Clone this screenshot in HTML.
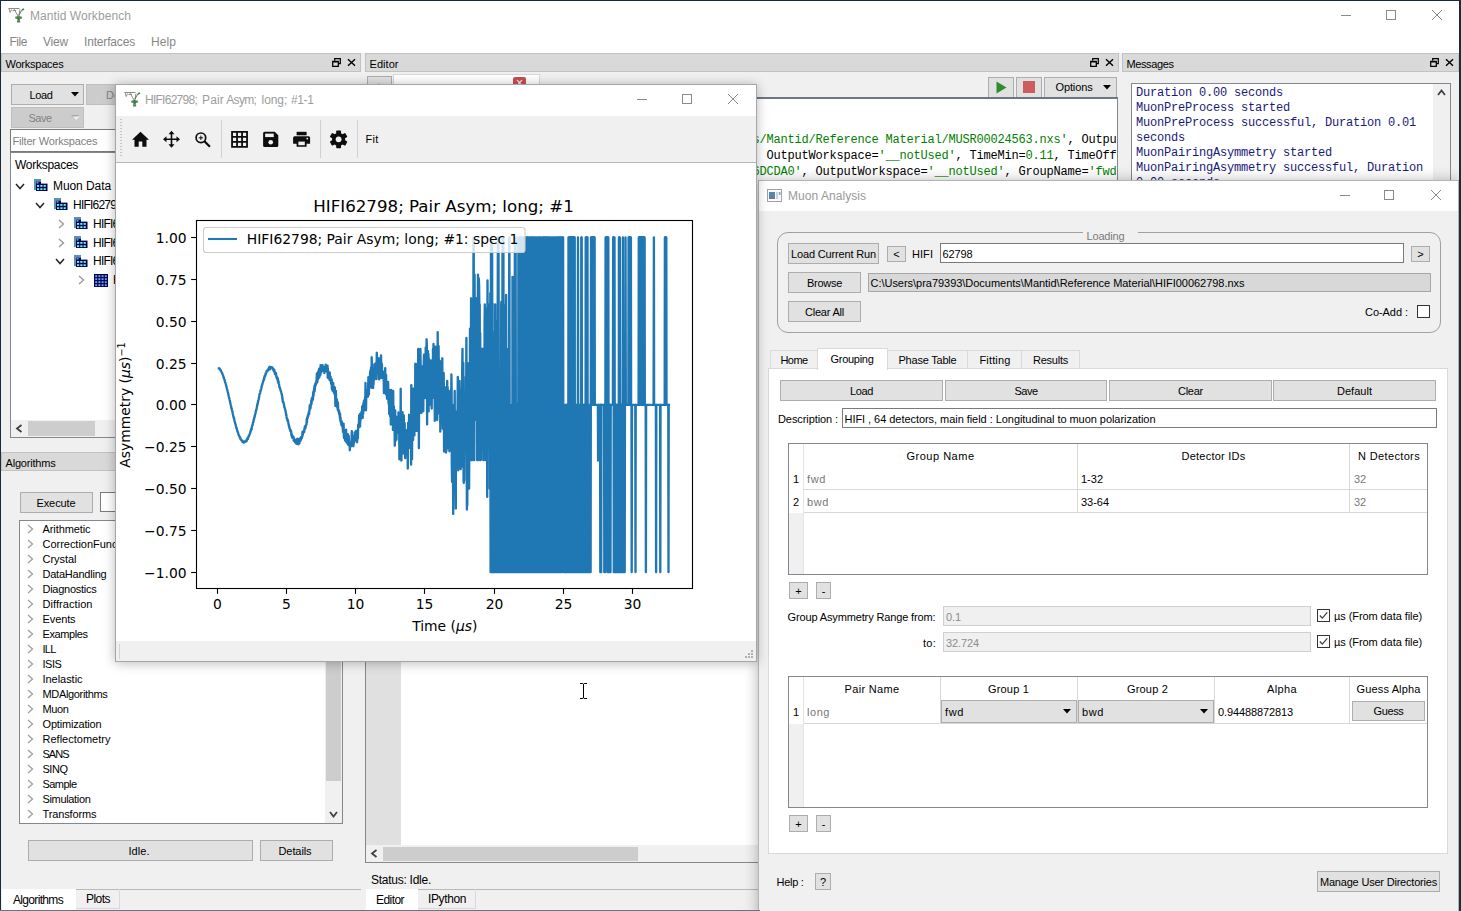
<!DOCTYPE html>
<html><head><meta charset="utf-8"><title>Mantid Workbench</title>
<style>
html,body{margin:0;padding:0;}
body{width:1461px;height:911px;overflow:hidden;background:#f0f0f0;position:relative;font-family:"Liberation Sans",sans-serif;}
#root{position:absolute;left:0;top:0;width:1461px;height:911px;overflow:hidden;background:#f0f0f0;}
#root div,#root svg,#root span.t{position:absolute;}
span.t{white-space:pre;}
svg{overflow:visible;}
</style></head><body><div id="root">
<div style="left:1px;top:1px;width:1458px;height:30px;background:#fff;"></div>
<svg style="left:8px;top:7px" width="17" height="16" viewBox="0 0 17 16">
<path d="M0.5 1.5 H11.5 M1 1.5 L2.2 5.5 L3.5 2.5 M4.5 3.5 H8 M6 2 L10 9 M12 2.5 L10.8 9" stroke="#8d8d8d" stroke-width="1" fill="none"/>
<path d="M10.8 8.5 L13 4.2 L14.5 2.8" stroke="#5a6a5a" stroke-width="1" fill="none"/>
<path d="M14 3 L16 2" stroke="#2e8b2e" stroke-width="1.4"/>
<ellipse cx="10.6" cy="10.6" rx="3.6" ry="1.6" fill="#6f7f6f"/>
<rect x="9.4" y="9.6" width="2.4" height="4.2" fill="#2e8b2e"/>
<rect x="9" y="13.6" width="3.2" height="1.9" fill="#6e6e6e"/>
</svg>
<span class="t" style="left:30.00px;top:7.80px;font-size:12px;line-height:16px;color:#9d9d9d;letter-spacing:0.073px;">Mantid Workbench</span>
<div style="left:1341px;top:15px;width:10px;height:1px;background:#8a8a8a;"></div>
<div style="left:1386px;top:10px;width:10px;height:10px;border:1px solid #8a8a8a;box-sizing:border-box;"></div>
<svg style="left:1431px;top:9px" width="12" height="12" viewBox="0 0 12 12"><path d="M1 1 L11 11 M11 1 L1 11" stroke="#8a8a8a" stroke-width="1" fill="none"/></svg>
<div style="left:1px;top:31px;width:1458px;height:22px;background:#fff;"></div>
<span class="t" style="left:9.50px;top:34.00px;font-size:12px;line-height:16px;color:#868686;letter-spacing:-0.459px;">File</span>
<span class="t" style="left:43.00px;top:34.00px;font-size:12px;line-height:16px;color:#868686;letter-spacing:-0.199px;">View</span>
<span class="t" style="left:84.00px;top:34.00px;font-size:12px;line-height:16px;color:#868686;letter-spacing:-0.169px;">Interfaces</span>
<span class="t" style="left:151.00px;top:34.00px;font-size:12px;line-height:16px;color:#868686;letter-spacing:0.080px;">Help</span>
<div style="left:1px;top:53px;width:360px;height:19px;background:#d9d9d9;border:1px solid #c2c2c2;box-sizing:border-box;"></div>
<span class="t" style="left:5.50px;top:57.00px;font-size:11px;line-height:15px;color:#000;letter-spacing:-0.232px;">Workspaces</span>
<svg style="left:331.7px;top:58px" width="9" height="9" viewBox="0 0 9 9"><path d="M2.7 2.5 V0.7 H8.3 V5.7 H6.5 M0.7 3.3 H6.3 V8.3 H0.7 Z M0.7 3.9 H6.3" stroke="#000" stroke-width="1.25" fill="none"/></svg>
<svg style="left:347.2px;top:58px" width="9" height="9" viewBox="0 0 9 9"><path d="M1 1.2 L8 7.8 M8 1.2 L1 7.8" stroke="#000" stroke-width="1.4" fill="none"/></svg>
<div style="left:11px;top:84px;width:73px;height:21px;background:#e1e1e1;border:1px solid #adadad;box-sizing:border-box;"></div>
<span class="t" style="left:29.50px;top:88.00px;font-size:11px;line-height:15px;color:#000;letter-spacing:-0.368px;">Load</span>
<svg style="left:70.5px;top:92px" width="8" height="5" viewBox="0 0 8 5"><path d="M0 0 H8 L4 4.5 Z" fill="#000"/></svg>
<div style="left:11px;top:107px;width:73px;height:21px;background:#cccccc;border:1px solid #bfbfbf;box-sizing:border-box;"></div>
<span class="t" style="left:28.50px;top:110.80px;font-size:11px;line-height:15px;color:#838383;letter-spacing:-0.518px;">Save</span>
<svg style="left:71px;top:115px" width="8" height="5" viewBox="0 0 8 5"><path d="M0 0 H8 L4 4.5 Z" fill="#a8a8a8"/><path d="M1.5 1.5 L8.5 1.5 L4.8 5 Z" fill="#fff" opacity="0.8"/></svg>
<div style="left:86px;top:84px;width:73px;height:21px;background:#cccccc;border:1px solid #bfbfbf;box-sizing:border-box;"></div>
<span class="t" style="left:106.00px;top:87.50px;font-size:11px;line-height:15px;color:#838383;">De</span>
<div style="left:10px;top:129px;width:340px;height:23px;background:#fff;border:1px solid #7a7a7a;box-sizing:border-box;"></div>
<span class="t" style="left:12.40px;top:133.50px;font-size:11px;line-height:15px;color:#7f7f7f;letter-spacing:-0.166px;">Filter Workspaces</span>
<div style="left:10px;top:152px;width:340px;height:286px;background:#fff;border:1px solid #828790;box-sizing:border-box;"></div>
<span class="t" style="left:15.00px;top:156.50px;font-size:12px;line-height:16px;color:#000;letter-spacing:-0.280px;">Workspaces</span>
<svg style="left:15px;top:182.8px" width="10" height="7" viewBox="0 0 10 7"><path d="M1 1 L5 5.5 L9 1" stroke="#262626" stroke-width="1.5" fill="none"/></svg>
<svg style="left:34px;top:179.3px" width="14" height="12" viewBox="0 0 14 13" preserveAspectRatio="none">
<rect x="0" y="0" width="7" height="4" fill="#5f8fb8"/><rect x="0" y="0" width="2" height="12" fill="#5f8fb8"/>
<rect x="2" y="3" width="5" height="3" fill="#000060"/>
<rect x="2" y="5" width="11.5" height="8" fill="#00004a"/>
<g fill="#66f0f0"><rect x="3" y="6.5" width="2.2" height="2"/><rect x="6.3" y="6.5" width="2.2" height="2"/><rect x="9.6" y="6.5" width="2.2" height="2"/>
<rect x="3" y="10" width="2.2" height="2"/><rect x="6.3" y="10" width="2.2" height="2"/><rect x="9.6" y="10" width="2.2" height="2"/>
<rect x="2.5" y="3.6" width="2" height="1.2"/></g>
</svg>
<span class="t" style="left:53.00px;top:177.80px;font-size:12px;line-height:16px;color:#000;letter-spacing:-0.078px;">Muon Data</span>
<svg style="left:35px;top:201.7px" width="10" height="7" viewBox="0 0 10 7"><path d="M1 1 L5 5.5 L9 1" stroke="#262626" stroke-width="1.5" fill="none"/></svg>
<svg style="left:54px;top:198.2px" width="14" height="12" viewBox="0 0 14 13" preserveAspectRatio="none">
<rect x="0" y="0" width="7" height="4" fill="#5f8fb8"/><rect x="0" y="0" width="2" height="12" fill="#5f8fb8"/>
<rect x="2" y="3" width="5" height="3" fill="#000060"/>
<rect x="2" y="5" width="11.5" height="8" fill="#00004a"/>
<g fill="#66f0f0"><rect x="3" y="6.5" width="2.2" height="2"/><rect x="6.3" y="6.5" width="2.2" height="2"/><rect x="9.6" y="6.5" width="2.2" height="2"/>
<rect x="3" y="10" width="2.2" height="2"/><rect x="6.3" y="10" width="2.2" height="2"/><rect x="9.6" y="10" width="2.2" height="2"/>
<rect x="2.5" y="3.6" width="2" height="1.2"/></g>
</svg>
<span class="t" style="left:73.00px;top:196.70px;font-size:12px;line-height:16px;color:#000;letter-spacing:-0.782px;">HIFI62798</span>
<svg style="left:58px;top:218.6px" width="7" height="10" viewBox="0 0 7 10"><path d="M1 1 L5.5 5 L1 9" stroke="#9a9a9a" stroke-width="1.4" fill="none"/></svg>
<svg style="left:74px;top:217.1px" width="14" height="12" viewBox="0 0 14 13" preserveAspectRatio="none">
<rect x="0" y="0" width="7" height="4" fill="#5f8fb8"/><rect x="0" y="0" width="2" height="12" fill="#5f8fb8"/>
<rect x="2" y="3" width="5" height="3" fill="#000060"/>
<rect x="2" y="5" width="11.5" height="8" fill="#00004a"/>
<g fill="#66f0f0"><rect x="3" y="6.5" width="2.2" height="2"/><rect x="6.3" y="6.5" width="2.2" height="2"/><rect x="9.6" y="6.5" width="2.2" height="2"/>
<rect x="3" y="10" width="2.2" height="2"/><rect x="6.3" y="10" width="2.2" height="2"/><rect x="9.6" y="10" width="2.2" height="2"/>
<rect x="2.5" y="3.6" width="2" height="1.2"/></g>
</svg>
<span class="t" style="left:93.00px;top:215.60px;font-size:12px;line-height:16px;color:#000;letter-spacing:-0.782px;">HIFI62798</span>
<svg style="left:58px;top:237.5px" width="7" height="10" viewBox="0 0 7 10"><path d="M1 1 L5.5 5 L1 9" stroke="#9a9a9a" stroke-width="1.4" fill="none"/></svg>
<svg style="left:74px;top:236.0px" width="14" height="12" viewBox="0 0 14 13" preserveAspectRatio="none">
<rect x="0" y="0" width="7" height="4" fill="#5f8fb8"/><rect x="0" y="0" width="2" height="12" fill="#5f8fb8"/>
<rect x="2" y="3" width="5" height="3" fill="#000060"/>
<rect x="2" y="5" width="11.5" height="8" fill="#00004a"/>
<g fill="#66f0f0"><rect x="3" y="6.5" width="2.2" height="2"/><rect x="6.3" y="6.5" width="2.2" height="2"/><rect x="9.6" y="6.5" width="2.2" height="2"/>
<rect x="3" y="10" width="2.2" height="2"/><rect x="6.3" y="10" width="2.2" height="2"/><rect x="9.6" y="10" width="2.2" height="2"/>
<rect x="2.5" y="3.6" width="2" height="1.2"/></g>
</svg>
<span class="t" style="left:93.00px;top:234.50px;font-size:12px;line-height:16px;color:#000;letter-spacing:-0.782px;">HIFI62798</span>
<svg style="left:55px;top:258.4px" width="10" height="7" viewBox="0 0 10 7"><path d="M1 1 L5 5.5 L9 1" stroke="#262626" stroke-width="1.5" fill="none"/></svg>
<svg style="left:74px;top:254.89999999999998px" width="14" height="12" viewBox="0 0 14 13" preserveAspectRatio="none">
<rect x="0" y="0" width="7" height="4" fill="#5f8fb8"/><rect x="0" y="0" width="2" height="12" fill="#5f8fb8"/>
<rect x="2" y="3" width="5" height="3" fill="#000060"/>
<rect x="2" y="5" width="11.5" height="8" fill="#00004a"/>
<g fill="#66f0f0"><rect x="3" y="6.5" width="2.2" height="2"/><rect x="6.3" y="6.5" width="2.2" height="2"/><rect x="9.6" y="6.5" width="2.2" height="2"/>
<rect x="3" y="10" width="2.2" height="2"/><rect x="6.3" y="10" width="2.2" height="2"/><rect x="9.6" y="10" width="2.2" height="2"/>
<rect x="2.5" y="3.6" width="2" height="1.2"/></g>
</svg>
<span class="t" style="left:93.00px;top:253.40px;font-size:12px;line-height:16px;color:#000;letter-spacing:-0.782px;">HIFI62798</span>
<svg style="left:78px;top:275.3px" width="7" height="10" viewBox="0 0 7 10"><path d="M1 1 L5.5 5 L1 9" stroke="#9a9a9a" stroke-width="1.4" fill="none"/></svg>
<svg style="left:94px;top:273.8px" width="14" height="13" viewBox="0 0 14 13">
<rect x="0" y="0" width="14" height="13" fill="#000050"/><g fill="#6fa0e8"><rect x="1.2" y="1.2" width="2" height="1.9"/><rect x="1.2" y="4.2" width="2" height="1.9"/><rect x="1.2" y="7.2" width="2" height="1.9"/><rect x="1.2" y="10.2" width="2" height="1.9"/><rect x="4.4" y="1.2" width="2" height="1.9"/><rect x="4.4" y="4.2" width="2" height="1.9"/><rect x="4.4" y="7.2" width="2" height="1.9"/><rect x="4.4" y="10.2" width="2" height="1.9"/><rect x="7.6000000000000005" y="1.2" width="2" height="1.9"/><rect x="7.6000000000000005" y="4.2" width="2" height="1.9"/><rect x="7.6000000000000005" y="7.2" width="2" height="1.9"/><rect x="7.6000000000000005" y="10.2" width="2" height="1.9"/><rect x="10.8" y="1.2" width="2" height="1.9"/><rect x="10.8" y="4.2" width="2" height="1.9"/><rect x="10.8" y="7.2" width="2" height="1.9"/><rect x="10.8" y="10.2" width="2" height="1.9"/></g></svg>
<span class="t" style="left:113.00px;top:272.30px;font-size:12px;line-height:16px;color:#000;letter-spacing:-0.782px;">HIFI62798</span>
<div style="left:11px;top:420px;width:338px;height:17px;background:#f0f0f0;"></div>
<div style="left:28px;top:421px;width:67px;height:15px;background:#cdcdcd;"></div>
<svg style="left:15px;top:424px" width="8" height="9" viewBox="0 0 8 9"><path d="M6.5 1 L2 4.5 L6.5 8" stroke="#404040" stroke-width="1.8" fill="none"/></svg>
<div style="left:1px;top:452px;width:360px;height:19px;background:#d9d9d9;border:1px solid #c2c2c2;box-sizing:border-box;"></div>
<span class="t" style="left:5.50px;top:456.00px;font-size:11px;line-height:15px;color:#000;letter-spacing:-0.196px;">Algorithms</span>
<svg style="left:331.7px;top:457px" width="9" height="9" viewBox="0 0 9 9"><path d="M2.7 2.5 V0.7 H8.3 V5.7 H6.5 M0.7 3.3 H6.3 V8.3 H0.7 Z M0.7 3.9 H6.3" stroke="#000" stroke-width="1.25" fill="none"/></svg>
<svg style="left:347.2px;top:457px" width="9" height="9" viewBox="0 0 9 9"><path d="M1 1.2 L8 7.8 M8 1.2 L1 7.8" stroke="#000" stroke-width="1.4" fill="none"/></svg>
<div style="left:20px;top:492px;width:73px;height:21px;background:#e1e1e1;border:1px solid #adadad;box-sizing:border-box;"></div>
<span class="t" style="left:36.50px;top:495.80px;font-size:11px;line-height:15px;color:#000;letter-spacing:-0.107px;">Execute</span>
<div style="left:100px;top:492px;width:243px;height:20px;background:#fff;border:1px solid #7a7a7a;box-sizing:border-box;"></div>
<div style="left:19px;top:520px;width:324px;height:304px;background:#fff;border:1px solid #828790;box-sizing:border-box;"></div>
<svg style="left:27px;top:524px" width="7" height="10" viewBox="0 0 7 10"><path d="M1 1 L5.5 5 L1 9" stroke="#a0a0a0" stroke-width="1.3" fill="none"/></svg>
<span class="t" style="left:42.50px;top:521.50px;font-size:11px;line-height:15px;color:#000;letter-spacing:-0.090px;">Arithmetic</span>
<svg style="left:27px;top:539px" width="7" height="10" viewBox="0 0 7 10"><path d="M1 1 L5.5 5 L1 9" stroke="#a0a0a0" stroke-width="1.3" fill="none"/></svg>
<span class="t" style="left:42.50px;top:536.50px;font-size:11px;line-height:15px;color:#000;letter-spacing:-0.023px;">CorrectionFunctions</span>
<svg style="left:27px;top:554px" width="7" height="10" viewBox="0 0 7 10"><path d="M1 1 L5.5 5 L1 9" stroke="#a0a0a0" stroke-width="1.3" fill="none"/></svg>
<span class="t" style="left:42.50px;top:551.50px;font-size:11px;line-height:15px;color:#000;letter-spacing:-0.032px;">Crystal</span>
<svg style="left:27px;top:569px" width="7" height="10" viewBox="0 0 7 10"><path d="M1 1 L5.5 5 L1 9" stroke="#a0a0a0" stroke-width="1.3" fill="none"/></svg>
<span class="t" style="left:42.50px;top:566.50px;font-size:11px;line-height:15px;color:#000;letter-spacing:-0.221px;">DataHandling</span>
<svg style="left:27px;top:584px" width="7" height="10" viewBox="0 0 7 10"><path d="M1 1 L5.5 5 L1 9" stroke="#a0a0a0" stroke-width="1.3" fill="none"/></svg>
<span class="t" style="left:42.50px;top:581.50px;font-size:11px;line-height:15px;color:#000;letter-spacing:-0.260px;">Diagnostics</span>
<svg style="left:27px;top:599px" width="7" height="10" viewBox="0 0 7 10"><path d="M1 1 L5.5 5 L1 9" stroke="#a0a0a0" stroke-width="1.3" fill="none"/></svg>
<span class="t" style="left:42.50px;top:596.50px;font-size:11px;line-height:15px;color:#000;letter-spacing:0.062px;">Diffraction</span>
<svg style="left:27px;top:614px" width="7" height="10" viewBox="0 0 7 10"><path d="M1 1 L5.5 5 L1 9" stroke="#a0a0a0" stroke-width="1.3" fill="none"/></svg>
<span class="t" style="left:42.50px;top:611.50px;font-size:11px;line-height:15px;color:#000;letter-spacing:-0.105px;">Events</span>
<svg style="left:27px;top:629px" width="7" height="10" viewBox="0 0 7 10"><path d="M1 1 L5.5 5 L1 9" stroke="#a0a0a0" stroke-width="1.3" fill="none"/></svg>
<span class="t" style="left:42.50px;top:626.50px;font-size:11px;line-height:15px;color:#000;letter-spacing:-0.412px;">Examples</span>
<svg style="left:27px;top:644px" width="7" height="10" viewBox="0 0 7 10"><path d="M1 1 L5.5 5 L1 9" stroke="#a0a0a0" stroke-width="1.3" fill="none"/></svg>
<span class="t" style="left:42.50px;top:641.50px;font-size:11px;line-height:15px;color:#000;letter-spacing:-0.764px;">ILL</span>
<svg style="left:27px;top:659px" width="7" height="10" viewBox="0 0 7 10"><path d="M1 1 L5.5 5 L1 9" stroke="#a0a0a0" stroke-width="1.3" fill="none"/></svg>
<span class="t" style="left:42.50px;top:656.50px;font-size:11px;line-height:15px;color:#000;letter-spacing:-0.447px;">ISIS</span>
<svg style="left:27px;top:674px" width="7" height="10" viewBox="0 0 7 10"><path d="M1 1 L5.5 5 L1 9" stroke="#a0a0a0" stroke-width="1.3" fill="none"/></svg>
<span class="t" style="left:42.50px;top:671.50px;font-size:11px;line-height:15px;color:#000;letter-spacing:-0.039px;">Inelastic</span>
<svg style="left:27px;top:689px" width="7" height="10" viewBox="0 0 7 10"><path d="M1 1 L5.5 5 L1 9" stroke="#a0a0a0" stroke-width="1.3" fill="none"/></svg>
<span class="t" style="left:42.50px;top:686.50px;font-size:11px;line-height:15px;color:#000;letter-spacing:-0.339px;">MDAlgorithms</span>
<svg style="left:27px;top:704px" width="7" height="10" viewBox="0 0 7 10"><path d="M1 1 L5.5 5 L1 9" stroke="#a0a0a0" stroke-width="1.3" fill="none"/></svg>
<span class="t" style="left:42.50px;top:701.50px;font-size:11px;line-height:15px;color:#000;letter-spacing:-0.379px;">Muon</span>
<svg style="left:27px;top:719px" width="7" height="10" viewBox="0 0 7 10"><path d="M1 1 L5.5 5 L1 9" stroke="#a0a0a0" stroke-width="1.3" fill="none"/></svg>
<span class="t" style="left:42.50px;top:716.50px;font-size:11px;line-height:15px;color:#000;letter-spacing:-0.178px;">Optimization</span>
<svg style="left:27px;top:734px" width="7" height="10" viewBox="0 0 7 10"><path d="M1 1 L5.5 5 L1 9" stroke="#a0a0a0" stroke-width="1.3" fill="none"/></svg>
<span class="t" style="left:42.50px;top:731.50px;font-size:11px;line-height:15px;color:#000;letter-spacing:0.011px;">Reflectometry</span>
<svg style="left:27px;top:749px" width="7" height="10" viewBox="0 0 7 10"><path d="M1 1 L5.5 5 L1 9" stroke="#a0a0a0" stroke-width="1.3" fill="none"/></svg>
<span class="t" style="left:42.50px;top:746.50px;font-size:11px;line-height:15px;color:#000;letter-spacing:-0.989px;">SANS</span>
<svg style="left:27px;top:764px" width="7" height="10" viewBox="0 0 7 10"><path d="M1 1 L5.5 5 L1 9" stroke="#a0a0a0" stroke-width="1.3" fill="none"/></svg>
<span class="t" style="left:42.50px;top:761.50px;font-size:11px;line-height:15px;color:#000;letter-spacing:-0.473px;">SINQ</span>
<svg style="left:27px;top:779px" width="7" height="10" viewBox="0 0 7 10"><path d="M1 1 L5.5 5 L1 9" stroke="#a0a0a0" stroke-width="1.3" fill="none"/></svg>
<span class="t" style="left:42.50px;top:776.50px;font-size:11px;line-height:15px;color:#000;letter-spacing:-0.550px;">Sample</span>
<svg style="left:27px;top:794px" width="7" height="10" viewBox="0 0 7 10"><path d="M1 1 L5.5 5 L1 9" stroke="#a0a0a0" stroke-width="1.3" fill="none"/></svg>
<span class="t" style="left:42.50px;top:791.50px;font-size:11px;line-height:15px;color:#000;letter-spacing:-0.336px;">Simulation</span>
<svg style="left:27px;top:809px" width="7" height="10" viewBox="0 0 7 10"><path d="M1 1 L5.5 5 L1 9" stroke="#a0a0a0" stroke-width="1.3" fill="none"/></svg>
<span class="t" style="left:42.50px;top:806.50px;font-size:11px;line-height:15px;color:#000;letter-spacing:-0.121px;">Transforms</span>
<div style="left:325px;top:521px;width:17px;height:302px;background:#f0f0f0;"></div>
<div style="left:326px;top:540px;width:15px;height:241px;background:#cdcdcd;"></div>
<svg style="left:329px;top:811px" width="9" height="7" viewBox="0 0 9 7"><path d="M1 1 L4.5 5.5 L8 1" stroke="#404040" stroke-width="1.8" fill="none"/></svg>
<div style="left:28px;top:840px;width:225px;height:21px;background:#e1e1e1;border:1px solid #adadad;box-sizing:border-box;"></div>
<span class="t" style="left:128.50px;top:843.80px;font-size:11px;line-height:15px;color:#000;letter-spacing:0.042px;">Idle.</span>
<div style="left:260px;top:840px;width:73px;height:21px;background:#e1e1e1;border:1px solid #adadad;box-sizing:border-box;"></div>
<span class="t" style="left:278.50px;top:843.80px;font-size:11px;line-height:15px;color:#000;letter-spacing:-0.089px;">Details</span>
<div style="left:76px;top:889px;width:285px;height:1px;background:#b9b9b9;"></div>
<div style="left:2px;top:889px;width:74px;height:22px;background:#fff;"></div>
<span class="t" style="left:13.00px;top:892.00px;font-size:12px;line-height:16px;color:#000;letter-spacing:-0.669px;">Algorithms</span>
<div style="left:76px;top:889px;width:44px;height:20px;border-right:1px solid #d9d9d9;border-bottom:1px solid #d9d9d9;box-sizing:border-box;"></div>
<span class="t" style="left:86.00px;top:891.00px;font-size:12px;line-height:16px;color:#000;letter-spacing:-0.536px;">Plots</span>
<div style="left:365px;top:53px;width:754px;height:19px;background:#d9d9d9;border:1px solid #c2c2c2;box-sizing:border-box;"></div>
<span class="t" style="left:369.50px;top:57.00px;font-size:11px;line-height:15px;color:#000;letter-spacing:0.044px;">Editor</span>
<svg style="left:1089.7px;top:58px" width="9" height="9" viewBox="0 0 9 9"><path d="M2.7 2.5 V0.7 H8.3 V5.7 H6.5 M0.7 3.3 H6.3 V8.3 H0.7 Z M0.7 3.9 H6.3" stroke="#000" stroke-width="1.25" fill="none"/></svg>
<svg style="left:1105.2px;top:58px" width="9" height="9" viewBox="0 0 9 9"><path d="M1 1.2 L8 7.8 M8 1.2 L1 7.8" stroke="#000" stroke-width="1.4" fill="none"/></svg>
<div style="left:367px;top:76px;width:25px;height:22px;background:#e1e1e1;border:1px solid #adadad;box-sizing:border-box;"></div>
<span class="t" style="left:375.20px;top:77.50px;font-size:13px;line-height:17px;color:#000;">+</span>
<div style="left:393px;top:74px;width:147px;height:24px;background:#fff;border:1px solid #d9d9d9;box-sizing:border-box;"></div>
<span class="t" style="left:418.00px;top:80.50px;font-size:11px;line-height:15px;color:#000;">temp.py</span>
<div style="left:513px;top:77px;width:13px;height:12px;background:#c75050;border-radius:2px;"></div>
<span class="t" style="left:516.00px;top:75.00px;font-size:12px;line-height:16px;color:#fff;">×</span>
<div style="left:988px;top:77px;width:26px;height:21px;background:#e1e1e1;border:1px solid #adadad;box-sizing:border-box;"></div>
<svg style="left:996px;top:81px" width="11" height="13" viewBox="0 0 11 13"><path d="M0.5 0.5 L10.5 6.5 L0.5 12.5 Z" fill="#2e8b2e"/></svg>
<div style="left:1016px;top:77px;width:26px;height:21px;background:#e1e1e1;border:1px solid #adadad;box-sizing:border-box;"></div>
<div style="left:1023px;top:81px;width:12px;height:12px;background:#cd5c5c;"></div>
<div style="left:1044px;top:77px;width:73px;height:21px;background:#e1e1e1;border:1px solid #adadad;box-sizing:border-box;"></div>
<span class="t" style="left:1055.50px;top:79.50px;font-size:11px;line-height:15px;color:#000;letter-spacing:-0.130px;">Options</span>
<svg style="left:1103px;top:85px" width="8" height="5" viewBox="0 0 8 5"><path d="M0 0 H8 L4 4.5 Z" fill="#000"/></svg>
<div style="left:365px;top:97px;width:753px;height:766px;background:#fff;border:1px solid #828790;border-top:2px solid #6e7680;box-sizing:border-box;"></div>
<div style="left:366px;top:99px;width:35px;height:746px;background:#e0e0e0;"></div>
<span class="t" style="left:752.50px;top:132.00px;font-size:12px;line-height:16px;color:#007f00;font-family:'Liberation Mono', monospace;letter-spacing:-0.201px;">s/Mantid/Reference Material/MUSR00024563.nxs'</span>
<span class="t" style="left:1067.50px;top:132.00px;font-size:12px;line-height:16px;color:#000;font-family:'Liberation Mono', monospace;letter-spacing:-0.201px;">, Outpu</span>
<span class="t" style="left:752.50px;top:148.00px;font-size:12px;line-height:16px;color:#007f00;font-family:'Liberation Mono', monospace;">,</span>
<span class="t" style="left:759.50px;top:148.00px;font-size:12px;line-height:16px;color:#000;font-family:'Liberation Mono', monospace;letter-spacing:-0.201px;"> OutputWorkspace=</span>
<span class="t" style="left:878.50px;top:148.00px;font-size:12px;line-height:16px;color:#007f00;font-family:'Liberation Mono', monospace;letter-spacing:-0.201px;">'__notUsed'</span>
<span class="t" style="left:955.50px;top:148.00px;font-size:12px;line-height:16px;color:#000;font-family:'Liberation Mono', monospace;letter-spacing:-0.201px;">, TimeMin=</span>
<span class="t" style="left:1025.50px;top:148.00px;font-size:12px;line-height:16px;color:#007f00;font-family:'Liberation Mono', monospace;letter-spacing:-0.201px;">0.11</span>
<span class="t" style="left:1053.50px;top:148.00px;font-size:12px;line-height:16px;color:#000;font-family:'Liberation Mono', monospace;letter-spacing:-0.201px;">, TimeOff</span>
<span class="t" style="left:752.50px;top:164.00px;font-size:12px;line-height:16px;color:#007f00;font-family:'Liberation Mono', monospace;letter-spacing:-0.201px;">6DCDA0'</span>
<span class="t" style="left:801.50px;top:164.00px;font-size:12px;line-height:16px;color:#000;font-family:'Liberation Mono', monospace;letter-spacing:-0.201px;">, OutputWorkspace=</span>
<span class="t" style="left:927.50px;top:164.00px;font-size:12px;line-height:16px;color:#007f00;font-family:'Liberation Mono', monospace;letter-spacing:-0.201px;">'__notUsed'</span>
<span class="t" style="left:1004.50px;top:164.00px;font-size:12px;line-height:16px;color:#000;font-family:'Liberation Mono', monospace;letter-spacing:-0.201px;">, GroupName=</span>
<span class="t" style="left:1088.50px;top:164.00px;font-size:12px;line-height:16px;color:#007f00;font-family:'Liberation Mono', monospace;letter-spacing:-0.201px;">'fwd</span>
<div style="left:366px;top:845px;width:751px;height:17px;background:#f0f0f0;"></div>
<div style="left:383px;top:846.5px;width:255px;height:14px;background:#cdcdcd;"></div>
<svg style="left:370px;top:849px" width="8" height="9" viewBox="0 0 8 9"><path d="M6.5 1 L2 4.5 L6.5 8" stroke="#404040" stroke-width="1.8" fill="none"/></svg>
<span class="t" style="left:371.00px;top:872.00px;font-size:12px;line-height:16px;color:#000;letter-spacing:-0.259px;">Status: Idle.</span>
<div style="left:418px;top:889px;width:701px;height:1px;background:#b9b9b9;"></div>
<div style="left:366px;top:889px;width:52px;height:22px;background:#fff;"></div>
<span class="t" style="left:376.00px;top:892.00px;font-size:12px;line-height:16px;color:#000;letter-spacing:-0.558px;">Editor</span>
<div style="left:418px;top:889px;width:58px;height:20px;border-right:1px solid #d9d9d9;border-bottom:1px solid #d9d9d9;box-sizing:border-box;"></div>
<span class="t" style="left:428.00px;top:891.00px;font-size:12px;line-height:16px;color:#000;letter-spacing:-0.385px;">IPython</span>
<svg style="left:579px;top:683px" width="9" height="16" viewBox="0 0 9 16"><path d="M1 0.5 H3.8 M5.2 0.5 H8 M1 15.5 H3.8 M5.2 15.5 H8 M4.5 1 V15 M3.8 0.5 L4.5 1.2 L5.2 0.5 M3.8 15.5 L4.5 14.8 L5.2 15.5" stroke="#000" stroke-width="1" fill="none"/></svg>
<div style="left:1122px;top:53px;width:337px;height:19px;background:#d9d9d9;border:1px solid #c2c2c2;box-sizing:border-box;"></div>
<span class="t" style="left:1126.50px;top:57.00px;font-size:11px;line-height:15px;color:#000;letter-spacing:-0.392px;">Messages</span>
<svg style="left:1429.7px;top:58px" width="9" height="9" viewBox="0 0 9 9"><path d="M2.7 2.5 V0.7 H8.3 V5.7 H6.5 M0.7 3.3 H6.3 V8.3 H0.7 Z M0.7 3.9 H6.3" stroke="#000" stroke-width="1.25" fill="none"/></svg>
<svg style="left:1445.2px;top:58px" width="9" height="9" viewBox="0 0 9 9"><path d="M1 1.2 L8 7.8 M8 1.2 L1 7.8" stroke="#000" stroke-width="1.4" fill="none"/></svg>
<div style="left:1131px;top:83px;width:320px;height:120px;background:#fff;border:1px solid #828790;box-sizing:border-box;"></div>
<span class="t" style="left:1136.00px;top:85.00px;font-size:12px;line-height:16px;color:#1a1a78;font-family:'Liberation Mono', monospace;letter-spacing:-0.201px;">Duration 0.00 seconds</span>
<span class="t" style="left:1136.00px;top:100.00px;font-size:12px;line-height:16px;color:#1a1a78;font-family:'Liberation Mono', monospace;letter-spacing:-0.201px;">MuonPreProcess started</span>
<span class="t" style="left:1136.00px;top:115.00px;font-size:12px;line-height:16px;color:#1a1a78;font-family:'Liberation Mono', monospace;letter-spacing:-0.201px;">MuonPreProcess successful, Duration 0.01</span>
<span class="t" style="left:1136.00px;top:130.00px;font-size:12px;line-height:16px;color:#1a1a78;font-family:'Liberation Mono', monospace;letter-spacing:-0.201px;">seconds</span>
<span class="t" style="left:1136.00px;top:145.00px;font-size:12px;line-height:16px;color:#1a1a78;font-family:'Liberation Mono', monospace;letter-spacing:-0.201px;">MuonPairingAsymmetry started</span>
<span class="t" style="left:1136.00px;top:160.00px;font-size:12px;line-height:16px;color:#1a1a78;font-family:'Liberation Mono', monospace;letter-spacing:-0.201px;">MuonPairingAsymmetry successful, Duration</span>
<span class="t" style="left:1136.00px;top:175.00px;font-size:12px;line-height:16px;color:#1a1a78;font-family:'Liberation Mono', monospace;letter-spacing:-0.201px;">0.00 seconds</span>
<div style="left:1433px;top:84px;width:17px;height:118px;background:#f0f0f0;"></div>
<svg style="left:1437px;top:89px" width="9" height="7" viewBox="0 0 9 7"><path d="M1 6 L4.5 1.5 L8 6" stroke="#404040" stroke-width="1.8" fill="none"/></svg>
<div style="left:758px;top:180px;width:701px;height:740px;background:#f0f0f0;border:1px solid #b4b4b4;box-sizing:border-box;box-shadow:0 1px 13px rgba(0,0,0,0.3);"></div>
<div style="left:759px;top:181px;width:699px;height:30px;background:#fff;"></div>
<svg style="left:767px;top:189px" width="15" height="13" viewBox="0 0 15 13"><defs><linearGradient id="mi" x1="0" y1="0" x2="0.6" y2="1"><stop offset="0" stop-color="#3f8fe0"/><stop offset="1" stop-color="#6f7c8a"/></linearGradient></defs><rect x="0.5" y="0.5" width="14" height="12" fill="#fbfbfb" stroke="#a2a2a2"/><rect x="2" y="3" width="6" height="7" fill="url(#mi)"/><rect x="9" y="3" width="2.2" height="7" fill="#d2d2d2"/><rect x="12" y="3" width="1.5" height="3" fill="#6fa3dc"/></svg>
<span class="t" style="left:788.00px;top:187.50px;font-size:12px;line-height:16px;color:#999;letter-spacing:0.048px;">Muon Analysis</span>
<div style="left:1340px;top:195px;width:10px;height:1px;background:#8a8a8a;"></div>
<div style="left:1384px;top:190px;width:10px;height:10px;border:1px solid #8a8a8a;box-sizing:border-box;"></div>
<svg style="left:1430px;top:189px" width="12" height="12" viewBox="0 0 12 12"><path d="M1 1 L11 11 M11 1 L1 11" stroke="#8a8a8a" stroke-width="1" fill="none"/></svg>
<div style="left:777px;top:232px;width:664px;height:101px;border:1px solid #a0a0a0;border-radius:11px;box-sizing:border-box;"></div>
<div style="left:1083px;top:228px;width:55px;height:10px;background:#f0f0f0;"></div>
<span class="t" style="left:1086.50px;top:228.50px;font-size:11px;line-height:15px;color:#7b7b7b;letter-spacing:-0.164px;">Loading</span>
<div style="left:788px;top:243px;width:91px;height:21px;background:#e1e1e1;border:1px solid #adadad;box-sizing:border-box;"></div>
<span class="t" style="left:791.00px;top:246.80px;font-size:11px;line-height:15px;color:#000;letter-spacing:-0.153px;">Load Current Run</span>
<div style="left:887px;top:246px;width:19px;height:16px;background:#e1e1e1;border:1px solid #adadad;box-sizing:border-box;"></div>
<span class="t" style="left:893.29px;top:247.30px;font-size:11px;line-height:15px;color:#000;">&lt;</span>
<span class="t" style="left:912.00px;top:246.50px;font-size:11px;line-height:15px;color:#000;letter-spacing:0.056px;">HIFI</span>
<div style="left:940px;top:243px;width:464px;height:20px;background:#fff;border:1px solid #7a7a7a;box-sizing:border-box;"></div>
<span class="t" style="left:942.50px;top:246.50px;font-size:11px;line-height:15px;color:#000;letter-spacing:-0.118px;">62798</span>
<div style="left:1411px;top:246px;width:19px;height:16px;background:#e1e1e1;border:1px solid #adadad;box-sizing:border-box;"></div>
<span class="t" style="left:1417.29px;top:247.30px;font-size:11px;line-height:15px;color:#000;">&gt;</span>
<div style="left:788px;top:272px;width:73px;height:21px;background:#e1e1e1;border:1px solid #adadad;box-sizing:border-box;"></div>
<span class="t" style="left:807.00px;top:275.80px;font-size:11px;line-height:15px;color:#000;letter-spacing:-0.280px;">Browse</span>
<div style="left:868px;top:273px;width:563px;height:19px;background:#d8d8d8;border:1px solid #a6a6a6;box-sizing:border-box;"></div>
<span class="t" style="left:870.50px;top:275.50px;font-size:11px;line-height:15px;color:#000;letter-spacing:-0.029px;">C:\Users\pra79393\Documents\Mantid\Reference Material\HIFI00062798.nxs</span>
<div style="left:788px;top:301px;width:73px;height:21px;background:#e1e1e1;border:1px solid #adadad;box-sizing:border-box;"></div>
<span class="t" style="left:805.00px;top:304.80px;font-size:11px;line-height:15px;color:#000;letter-spacing:-0.218px;">Clear All</span>
<span class="t" style="left:1365.00px;top:304.50px;font-size:11px;line-height:15px;color:#000;letter-spacing:-0.051px;">Co-Add :</span>
<div style="left:1417px;top:305px;width:13px;height:13px;background:#fff;border:1px solid #333;box-sizing:border-box;"></div>
<div style="left:768px;top:368px;width:680px;height:486px;background:#fff;border:1px solid #d9d9d9;box-sizing:border-box;"></div>
<div style="left:770px;top:350px;width:48px;height:19px;background:#f0f0f0;border:1px solid #d9d9d9;box-sizing:border-box;"></div>
<span class="t" style="left:780.50px;top:352.50px;font-size:11px;line-height:15px;color:#000;letter-spacing:-0.586px;">Home</span>
<div style="left:887px;top:350px;width:81px;height:19px;background:#f0f0f0;border:1px solid #d9d9d9;box-sizing:border-box;"></div>
<span class="t" style="left:898.50px;top:352.50px;font-size:11px;line-height:15px;color:#000;letter-spacing:-0.213px;">Phase Table</span>
<div style="left:967px;top:350px;width:56px;height:19px;background:#f0f0f0;border:1px solid #d9d9d9;box-sizing:border-box;"></div>
<span class="t" style="left:979.50px;top:352.50px;font-size:11px;line-height:15px;color:#000;letter-spacing:0.149px;">Fitting</span>
<div style="left:1021px;top:350px;width:59px;height:19px;background:#f0f0f0;border:1px solid #d9d9d9;box-sizing:border-box;"></div>
<span class="t" style="left:1033.00px;top:352.50px;font-size:11px;line-height:15px;color:#000;letter-spacing:-0.240px;">Results</span>
<div style="left:817px;top:348px;width:71px;height:22px;background:#fff;border:1px solid #d9d9d9;border-bottom:none;box-sizing:border-box;"></div>
<span class="t" style="left:830.50px;top:351.50px;font-size:11px;line-height:15px;color:#000;letter-spacing:-0.282px;">Grouping</span>
<div style="left:780px;top:380px;width:163px;height:21px;background:#e1e1e1;border:1px solid #adadad;box-sizing:border-box;"></div>
<span class="t" style="left:850.00px;top:383.80px;font-size:11px;line-height:15px;color:#000;letter-spacing:-0.368px;">Load</span>
<div style="left:945px;top:380px;width:162px;height:21px;background:#e1e1e1;border:1px solid #adadad;box-sizing:border-box;"></div>
<span class="t" style="left:1014.50px;top:383.80px;font-size:11px;line-height:15px;color:#000;letter-spacing:-0.518px;">Save</span>
<div style="left:1109px;top:380px;width:163px;height:21px;background:#e1e1e1;border:1px solid #adadad;box-sizing:border-box;"></div>
<span class="t" style="left:1178.00px;top:383.80px;font-size:11px;line-height:15px;color:#000;letter-spacing:-0.257px;">Clear</span>
<div style="left:1273px;top:380px;width:163px;height:21px;background:#e1e1e1;border:1px solid #adadad;box-sizing:border-box;"></div>
<span class="t" style="left:1337.00px;top:383.80px;font-size:11px;line-height:15px;color:#000;letter-spacing:0.021px;">Default</span>
<span class="t" style="left:778.00px;top:411.50px;font-size:11px;line-height:15px;color:#000;letter-spacing:-0.087px;">Description :</span>
<div style="left:842px;top:408px;width:595px;height:20px;background:#fff;border:1px solid #7a7a7a;box-sizing:border-box;"></div>
<span class="t" style="left:844.50px;top:411.50px;font-size:11px;line-height:15px;color:#000;letter-spacing:-0.049px;">HIFI , 64 detectors, main field : Longitudinal to muon polarization</span>
<div style="left:788px;top:443px;width:640px;height:132px;background:#fff;border:1px solid #828790;box-sizing:border-box;"></div>
<div style="left:789px;top:513px;width:15px;height:61px;background:#f0f0f0;"></div>
<div style="left:803px;top:444px;width:1px;height:130px;background:#e5e5e5;"></div>
<div style="left:804px;top:489px;width:623px;height:1px;background:#d8d8d8;"></div>
<div style="left:804px;top:512px;width:623px;height:1px;background:#d8d8d8;"></div>
<div style="left:1077px;top:444px;width:1px;height:69px;background:#d8d8d8;"></div>
<div style="left:1349px;top:444px;width:1px;height:69px;background:#d8d8d8;"></div>
<span class="t" style="left:906.50px;top:448.60px;font-size:11px;line-height:15px;color:#000;letter-spacing:0.503px;">Group Name</span>
<span class="t" style="left:1181.50px;top:448.60px;font-size:11px;line-height:15px;color:#000;letter-spacing:0.239px;">Detector IDs</span>
<span class="t" style="left:1358.00px;top:448.60px;font-size:11px;line-height:15px;color:#000;letter-spacing:0.357px;">N Detectors</span>
<span class="t" style="left:793.00px;top:471.70px;font-size:11px;line-height:15px;color:#000;">1</span>
<span class="t" style="left:793.00px;top:494.70px;font-size:11px;line-height:15px;color:#000;">2</span>
<span class="t" style="left:807.00px;top:471.70px;font-size:11px;line-height:15px;color:#787878;letter-spacing:0.627px;">fwd</span>
<span class="t" style="left:807.00px;top:494.70px;font-size:11px;line-height:15px;color:#787878;letter-spacing:0.607px;">bwd</span>
<span class="t" style="left:1081.00px;top:471.70px;font-size:11px;line-height:15px;color:#000;">1-32</span>
<span class="t" style="left:1081.00px;top:494.70px;font-size:11px;line-height:15px;color:#000;letter-spacing:-0.027px;">33-64</span>
<span class="t" style="left:1354.00px;top:471.70px;font-size:11px;line-height:15px;color:#787878;letter-spacing:-0.118px;">32</span>
<span class="t" style="left:1354.00px;top:494.70px;font-size:11px;line-height:15px;color:#787878;letter-spacing:-0.118px;">32</span>
<div style="left:789px;top:582px;width:19px;height:17px;background:#e1e1e1;border:1px solid #adadad;box-sizing:border-box;"></div>
<span class="t" style="left:795.29px;top:583.80px;font-size:11px;line-height:15px;color:#000;">+</span>
<div style="left:816px;top:582px;width:15px;height:17px;background:#e1e1e1;border:1px solid #adadad;box-sizing:border-box;"></div>
<span class="t" style="left:821.67px;top:583.80px;font-size:11px;line-height:15px;color:#000;">-</span>
<span class="t" style="left:787.50px;top:609.50px;font-size:11px;line-height:15px;color:#000;letter-spacing:-0.134px;">Group Asymmetry Range from:</span>
<div style="left:943px;top:606px;width:368px;height:20px;background:#f0f0f0;border:1px solid #cfcfcf;box-sizing:border-box;"></div>
<span class="t" style="left:946.00px;top:609.50px;font-size:11px;line-height:15px;color:#8c8c8c;letter-spacing:-0.097px;">0.1</span>
<span class="t" style="left:923.00px;top:635.50px;font-size:11px;line-height:15px;color:#000;letter-spacing:0.257px;">to:</span>
<div style="left:943px;top:632px;width:368px;height:20px;background:#f0f0f0;border:1px solid #cfcfcf;box-sizing:border-box;"></div>
<span class="t" style="left:946.00px;top:635.50px;font-size:11px;line-height:15px;color:#8c8c8c;letter-spacing:-0.108px;">32.724</span>
<div style="left:1317px;top:609px;width:13px;height:13px;background:#fff;border:1px solid #333;box-sizing:border-box;"></div>
<svg style="left:1317px;top:609px" width="13" height="13" viewBox="0 0 13 13"><path d="M2.8 6.5 L5.3 9.2 L10.3 3.3" stroke="#3c3c3c" stroke-width="1.2" fill="none"/></svg>
<div style="left:1317px;top:635px;width:13px;height:13px;background:#fff;border:1px solid #333;box-sizing:border-box;"></div>
<svg style="left:1317px;top:635px" width="13" height="13" viewBox="0 0 13 13"><path d="M2.8 6.5 L5.3 9.2 L10.3 3.3" stroke="#3c3c3c" stroke-width="1.2" fill="none"/></svg>
<span class="t" style="left:1334.00px;top:608.50px;font-size:11px;line-height:15px;color:#000;letter-spacing:-0.077px;">µs (From data file)</span>
<span class="t" style="left:1334.00px;top:634.50px;font-size:11px;line-height:15px;color:#000;letter-spacing:-0.077px;">µs (From data file)</span>
<div style="left:788px;top:676px;width:640px;height:132px;background:#fff;border:1px solid #828790;box-sizing:border-box;"></div>
<div style="left:789px;top:724px;width:15px;height:83px;background:#f0f0f0;"></div>
<div style="left:803px;top:677px;width:1px;height:130px;background:#e5e5e5;"></div>
<div style="left:804px;top:723px;width:623px;height:1px;background:#d8d8d8;"></div>
<div style="left:940px;top:677px;width:1px;height:47px;background:#d8d8d8;"></div>
<div style="left:1077px;top:677px;width:1px;height:47px;background:#d8d8d8;"></div>
<div style="left:1214px;top:677px;width:1px;height:47px;background:#d8d8d8;"></div>
<div style="left:1349px;top:677px;width:1px;height:47px;background:#d8d8d8;"></div>
<span class="t" style="left:844.50px;top:682.10px;font-size:11px;line-height:15px;color:#000;letter-spacing:0.338px;">Pair Name</span>
<span class="t" style="left:988.00px;top:682.10px;font-size:11px;line-height:15px;color:#000;letter-spacing:0.179px;">Group 1</span>
<span class="t" style="left:1127.00px;top:682.10px;font-size:11px;line-height:15px;color:#000;letter-spacing:0.179px;">Group 2</span>
<span class="t" style="left:1267.00px;top:682.10px;font-size:11px;line-height:15px;color:#000;letter-spacing:0.373px;">Alpha</span>
<span class="t" style="left:1356.50px;top:682.10px;font-size:11px;line-height:15px;color:#000;letter-spacing:0.148px;">Guess Alpha</span>
<span class="t" style="left:793.00px;top:705.10px;font-size:11px;line-height:15px;color:#000;">1</span>
<span class="t" style="left:807.00px;top:705.10px;font-size:11px;line-height:15px;color:#787878;letter-spacing:0.551px;">long</span>
<div style="left:941px;top:700px;width:136px;height:23px;background:#e1e1e1;border:1px solid #adadad;box-sizing:border-box;"></div>
<span class="t" style="left:945.00px;top:705.10px;font-size:11px;line-height:15px;color:#000;letter-spacing:0.627px;">fwd</span>
<svg style="left:1063px;top:709px" width="8" height="5" viewBox="0 0 8 5"><path d="M0 0 H8 L4 4.5 Z" fill="#000"/></svg>
<div style="left:1078px;top:700px;width:136px;height:23px;background:#e1e1e1;border:1px solid #adadad;box-sizing:border-box;"></div>
<span class="t" style="left:1082.00px;top:705.10px;font-size:11px;line-height:15px;color:#000;letter-spacing:0.607px;">bwd</span>
<svg style="left:1200px;top:709px" width="8" height="5" viewBox="0 0 8 5"><path d="M0 0 H8 L4 4.5 Z" fill="#000"/></svg>
<span class="t" style="left:1218.00px;top:705.10px;font-size:11px;line-height:15px;color:#000;letter-spacing:-0.113px;">0.94488872813</span>
<div style="left:1352px;top:701px;width:73px;height:20px;background:#e1e1e1;border:1px solid #adadad;box-sizing:border-box;"></div>
<span class="t" style="left:1373.50px;top:704.30px;font-size:11px;line-height:15px;color:#000;letter-spacing:-0.358px;">Guess</span>
<div style="left:789px;top:815px;width:19px;height:17px;background:#e1e1e1;border:1px solid #adadad;box-sizing:border-box;"></div>
<span class="t" style="left:795.29px;top:816.80px;font-size:11px;line-height:15px;color:#000;">+</span>
<div style="left:816px;top:815px;width:15px;height:17px;background:#e1e1e1;border:1px solid #adadad;box-sizing:border-box;"></div>
<span class="t" style="left:821.67px;top:816.80px;font-size:11px;line-height:15px;color:#000;">-</span>
<span class="t" style="left:776.50px;top:874.50px;font-size:11px;line-height:15px;color:#000;letter-spacing:-0.289px;">Help :</span>
<div style="left:815px;top:873px;width:16px;height:17px;background:#e1e1e1;border:1px solid #adadad;box-sizing:border-box;"></div>
<span class="t" style="left:819.94px;top:874.80px;font-size:11px;line-height:15px;color:#000;">?</span>
<div style="left:1317px;top:871px;width:123px;height:21px;background:#e1e1e1;border:1px solid #adadad;box-sizing:border-box;"></div>
<span class="t" style="left:1320.00px;top:874.80px;font-size:11px;line-height:15px;color:#000;letter-spacing:-0.203px;">Manage User Directories</span>
<div style="left:115px;top:84px;width:642px;height:578px;background:#fff;border:1px solid #a5a5a5;box-sizing:border-box;box-shadow:0 1px 11px rgba(0,0,0,0.28);"></div>
<svg style="left:124px;top:91px" width="17" height="16" viewBox="0 0 17 16">
<path d="M0.5 1.5 H11.5 M1 1.5 L2.2 5.5 L3.5 2.5 M4.5 3.5 H8 M6 2 L10 9 M12 2.5 L10.8 9" stroke="#8d8d8d" stroke-width="1" fill="none"/>
<path d="M10.8 8.5 L13 4.2 L14.5 2.8" stroke="#5a6a5a" stroke-width="1" fill="none"/>
<path d="M14 3 L16 2" stroke="#2e8b2e" stroke-width="1.4"/>
<ellipse cx="10.6" cy="10.6" rx="3.6" ry="1.6" fill="#6f7f6f"/>
<rect x="9.4" y="9.6" width="2.4" height="4.2" fill="#2e8b2e"/>
<rect x="9" y="13.6" width="3.2" height="1.9" fill="#6e6e6e"/>
</svg>
<span class="t" style="left:145.00px;top:91.80px;font-size:12px;line-height:16px;color:#9d9d9d;letter-spacing:-0.737px;">HIFI62798;</span>
<span class="t" style="left:202.00px;top:91.80px;font-size:12px;line-height:16px;color:#9d9d9d;letter-spacing:0.165px;">Pair</span>
<span class="t" style="left:226.20px;top:91.80px;font-size:12px;line-height:16px;color:#9d9d9d;letter-spacing:-0.647px;">Asym;</span>
<span class="t" style="left:261.60px;top:91.80px;font-size:12px;line-height:16px;color:#9d9d9d;letter-spacing:-0.084px;">long;</span>
<span class="t" style="left:291.00px;top:91.80px;font-size:12px;line-height:16px;color:#9d9d9d;letter-spacing:-0.380px;">#1-1</span>
<div style="left:637px;top:99px;width:10px;height:1px;background:#8a8a8a;"></div>
<div style="left:682px;top:94px;width:10px;height:10px;border:1px solid #8a8a8a;box-sizing:border-box;"></div>
<svg style="left:727px;top:93px" width="12" height="12" viewBox="0 0 12 12"><path d="M1 1 L11 11 M11 1 L1 11" stroke="#8a8a8a" stroke-width="1" fill="none"/></svg>
<div style="left:116px;top:116px;width:640px;height:46px;background:#f0f0f0;"></div>
<div style="left:116px;top:162px;width:640px;height:1px;background:#b8b8b8;"></div>
<div style="left:120px;top:119px;width:2px;height:38px;background:repeating-linear-gradient(#c4c4c4 0 1px, transparent 1px 3px);"></div>
<div style="left:221px;top:120px;width:1px;height:38px;background:#d0d0d0;"></div>
<div style="left:320px;top:120px;width:1px;height:38px;background:#d0d0d0;"></div>
<div style="left:357px;top:120px;width:1px;height:38px;background:#d0d0d0;"></div>
<svg style="left:131px;top:130px" width="18" height="18" viewBox="0 0 18 18"><g transform="translate(0.5,0.3)"><path d="M9 1.5 L0.5 9.5 H3 V16.5 H7.2 V11.3 H10.8 V16.5 H15 V9.5 H17.5 Z" fill="#0d0d0d"/></g></svg>
<svg style="left:162px;top:130px" width="18" height="18" viewBox="0 0 18 18"><g transform="translate(0.5,0.3)"><path d="M9 2 V16 M2 9 H16" stroke="#0d0d0d" stroke-width="1.6" fill="none"/><path d="M9 0.5 L12 4 H6 Z M9 17.5 L12 14 H6 Z M0.5 9 L4 6 V12 Z M17.5 9 L14 6 V12 Z" fill="#0d0d0d"/></g></svg>
<svg style="left:194px;top:131px" width="17" height="17" viewBox="0 0 17 17"><g transform="translate(0.4,0.3)"><circle cx="6.5" cy="6.5" r="4.8" stroke="#0d0d0d" stroke-width="1.7" fill="none"/><path d="M10 10 L15.5 15.5" stroke="#0d0d0d" stroke-width="2.2"/><path d="M4.3 6.5 H8.7 M6.5 4.3 V8.7" stroke="#0d0d0d" stroke-width="1"/></g></svg>
<svg style="left:230px;top:130px" width="18" height="18" viewBox="0 0 18 18"><g transform="translate(0.55,0.3)"><path d="M1.5 1.5 H16.5 V16.5 H1.5 Z M6.5 1.5 V16.5 M11.5 1.5 V16.5 M1.5 6.5 H16.5 M1.5 11.5 H16.5" stroke="#0d0d0d" stroke-width="1.8" fill="none"/></g></svg>
<svg style="left:262px;top:131px" width="16.6" height="16.2" viewBox="0 0 16 16"><g transform="translate(0.4,0.3)"><path d="M0.5 2 Q0.5 0.5 2 0.5 H12 L15.5 4 V14 Q15.5 15.5 14 15.5 H2 Q0.5 15.5 0.5 14 Z" fill="#0d0d0d"/><rect x="2.5" y="2.3" width="8.5" height="3.4" fill="#f0f0f0"/><circle cx="8" cy="10.8" r="2.3" fill="#f0f0f0"/></g></svg>
<svg style="left:292px;top:131px" width="18" height="16" viewBox="0 0 18 16"><g transform="translate(0.6,0.3)"><rect x="4" y="0.5" width="10" height="3.5" fill="#0d0d0d"/><path d="M2 5 H16 Q17.5 5 17.5 6.5 V12.5 H14 V15.5 H4 V12.5 H0.5 V6.5 Q0.5 5 2 5 Z" fill="#0d0d0d"/><rect x="5.8" y="10.3" width="6.4" height="3.6" fill="#f0f0f0"/><circle cx="14.7" cy="7.3" r="0.9" fill="#f0f0f0"/></g></svg>
<svg style="left:329px;top:130px" width="18" height="18" viewBox="-9 -9 18 18"><g transform="translate(0.6,0.3)"><g fill="#0d0d0d"><rect x="-2.4" y="-8.9" width="4.8" height="4.5" rx="0.8" transform="rotate(0)"/><rect x="-2.4" y="-8.9" width="4.8" height="4.5" rx="0.8" transform="rotate(60)"/><rect x="-2.4" y="-8.9" width="4.8" height="4.5" rx="0.8" transform="rotate(120)"/><rect x="-2.4" y="-8.9" width="4.8" height="4.5" rx="0.8" transform="rotate(180)"/><rect x="-2.4" y="-8.9" width="4.8" height="4.5" rx="0.8" transform="rotate(240)"/><rect x="-2.4" y="-8.9" width="4.8" height="4.5" rx="0.8" transform="rotate(300)"/><circle r="6.5"/></g><circle r="2.9" fill="#f0f0f0"/></g></svg>
<span class="t" style="left:365.50px;top:131.50px;font-size:11px;line-height:15px;color:#000;letter-spacing:0.260px;">Fit</span>
<div style="left:116px;top:641px;width:640px;height:20px;background:#f0f0f0;"></div>
<div style="left:119px;top:644px;width:1px;height:15px;background:#d4d4d4;"></div>
<svg style="left:744px;top:649px" width="10" height="10" viewBox="0 0 10 10"><g fill="#b0b0b0"><rect x="7" y="1" width="2" height="2"/><rect x="4" y="4" width="2" height="2"/><rect x="7" y="4" width="2" height="2"/><rect x="1" y="7" width="2" height="2"/><rect x="4" y="7" width="2" height="2"/><rect x="7" y="7" width="2" height="2"/></g></svg>
<svg style="left:0;top:0" width="1461" height="911" viewBox="0 0 1461 911" font-family="DejaVu Sans, sans-serif">
<polyline points="218.8,368.4 219.1,368.4 219.3,368.3 219.5,368.7 219.7,368.8 219.9,369.3 220.2,369.6 220.4,370.3 220.6,370.0 220.8,370.3 221.0,371.0 221.3,371.2 221.5,371.9 221.7,372.5 221.9,372.6 222.2,373.2 222.4,373.8 222.6,374.4 222.8,374.9 223.0,375.4 223.3,376.2 223.5,376.7 223.7,377.4 223.9,378.2 224.1,378.7 224.4,379.3 224.6,380.0 224.8,381.1 225.0,381.8 225.3,382.6 225.5,382.8 225.7,383.8 225.9,384.5 226.1,385.4 226.4,386.4 226.6,387.3 226.8,388.1 227.0,389.1 227.2,389.5 227.5,390.7 227.7,391.7 227.9,392.4 228.1,393.5 228.3,393.9 228.6,395.8 228.8,396.7 229.0,397.1 229.2,398.1 229.5,399.2 229.7,400.1 229.9,400.9 230.1,402.3 230.3,403.0 230.6,404.3 230.8,405.0 231.0,405.8 231.2,406.8 231.4,408.3 231.7,408.5 231.9,409.7 232.1,410.4 232.3,411.6 232.6,412.5 232.8,414.0 233.0,414.6 233.2,415.6 233.4,416.4 233.7,417.8 233.9,417.9 234.1,418.9 234.3,419.6 234.5,420.8 234.8,421.7 235.0,422.1 235.2,423.4 235.4,423.9 235.7,425.0 235.9,426.1 236.1,426.5 236.3,427.6 236.5,428.2 236.8,428.8 237.0,429.8 237.2,430.9 237.4,431.0 237.6,431.7 237.9,432.3 238.1,432.7 238.3,433.6 238.5,434.1 238.7,435.1 239.0,435.6 239.2,435.7 239.4,436.3 239.6,437.0 239.9,437.6 240.1,437.4 240.3,438.7 240.5,438.7 240.7,439.2 241.0,439.5 241.2,439.8 241.4,440.1 241.6,440.5 241.8,440.2 242.1,440.4 242.3,441.7 242.5,441.9 242.7,441.4 243.0,441.2 243.2,441.8 243.4,441.8 243.6,442.0 243.8,442.6 244.1,441.7 244.3,441.5 244.5,441.6 244.7,442.1 244.9,442.1 245.2,441.4 245.4,441.6 245.6,441.2 245.8,440.8 246.1,441.0 246.3,441.3 246.5,441.1 246.7,440.9 246.9,439.1 247.2,439.4 247.4,439.4 247.6,438.2 247.8,439.1 248.0,437.7 248.3,437.2 248.5,437.2 248.7,436.0 248.9,436.0 249.1,435.7 249.4,434.9 249.6,434.4 249.8,433.5 250.0,433.3 250.3,432.8 250.5,431.0 250.7,430.7 250.9,430.8 251.1,429.1 251.4,429.5 251.6,429.1 251.8,426.9 252.0,426.6 252.2,425.7 252.5,425.2 252.7,424.4 252.9,423.4 253.1,422.3 253.4,422.2 253.6,420.1 253.8,419.3 254.0,419.6 254.2,417.7 254.5,417.6 254.7,416.5 254.9,415.3 255.1,414.6 255.3,414.3 255.6,412.6 255.8,411.5 256.0,411.0 256.2,409.5 256.5,409.3 256.7,408.3 256.9,407.0 257.1,405.8 257.3,405.1 257.6,403.5 257.8,403.7 258.0,401.3 258.2,401.4 258.4,400.3 258.7,399.3 258.9,398.3 259.1,396.8 259.3,395.9 259.5,394.2 259.8,393.7 260.0,393.5 260.2,392.4 260.4,391.1 260.7,390.0 260.9,390.1 261.1,389.2 261.3,388.5 261.5,387.1 261.8,386.1 262.0,385.4 262.2,385.0 262.4,383.9 262.6,383.2 262.9,382.1 263.1,381.4 263.3,380.5 263.5,380.8 263.8,379.9 264.0,378.0 264.2,379.1 264.4,377.7 264.6,376.2 264.9,375.6 265.1,376.1 265.3,375.0 265.5,374.6 265.7,373.3 266.0,373.5 266.2,372.9 266.4,372.2 266.6,371.2 266.9,371.5 267.1,370.4 267.3,371.1 267.5,370.8 267.7,370.1 268.0,370.3 268.2,369.7 268.4,369.0 268.6,368.4 268.8,369.2 269.1,367.7 269.3,368.0 269.5,366.7 269.7,367.7 269.9,369.3 270.2,367.6 270.4,367.5 270.6,367.8 270.8,367.1 271.1,367.6 271.3,367.3 271.5,367.4 271.7,367.6 271.9,367.2 272.2,367.6 272.4,367.4 272.6,369.0 272.8,368.8 273.0,369.4 273.3,370.0 273.5,368.9 273.7,370.2 273.9,371.3 274.2,370.5 274.4,370.2 274.6,372.3 274.8,372.1 275.0,374.1 275.3,372.6 275.5,374.0 275.7,373.8 275.9,373.2 276.1,374.5 276.4,377.2 276.6,376.5 276.8,378.4 277.0,377.1 277.3,378.0 277.5,379.0 277.7,380.8 277.9,378.5 278.1,382.7 278.4,381.0 278.6,382.2 278.8,383.5 279.0,384.3 279.2,385.2 279.5,387.4 279.7,387.5 279.9,388.1 280.1,388.2 280.3,389.2 280.6,390.8 280.8,390.9 281.0,391.2 281.2,392.2 281.5,393.3 281.7,394.0 281.9,395.5 282.1,395.6 282.3,398.0 282.6,399.5 282.8,401.3 283.0,402.1 283.2,401.5 283.4,402.2 283.7,403.5 283.9,404.3 284.1,405.4 284.3,407.0 284.6,407.6 284.8,408.2 285.0,408.9 285.2,409.7 285.4,410.1 285.7,412.4 285.9,412.6 286.1,415.1 286.3,414.4 286.5,416.7 286.8,418.2 287.0,419.0 287.2,418.6 287.4,420.4 287.7,421.2 287.9,420.1 288.1,421.8 288.3,422.4 288.5,424.2 288.8,424.8 289.0,426.8 289.2,426.2 289.4,427.3 289.6,428.8 289.9,429.0 290.1,429.1 290.3,430.8 290.5,431.2 290.7,430.8 291.0,430.5 291.2,432.2 291.4,435.5 291.6,433.8 291.9,436.3 292.1,437.7 292.3,435.3 292.5,436.2 292.7,437.4 293.0,436.9 293.2,437.0 293.4,436.8 293.6,437.0 293.8,440.9 294.1,438.9 294.3,440.3 294.5,440.8 294.7,440.1 295.0,442.2 295.2,440.5 295.4,439.9 295.6,440.5 295.8,440.6 296.1,440.3 296.3,443.8 296.5,442.9 296.7,442.6 296.9,439.2 297.2,443.0 297.4,443.5 297.6,438.8 297.8,440.7 298.1,440.7 298.3,444.4 298.5,440.4 298.7,442.6 298.9,440.4 299.2,442.6 299.4,443.4 299.6,438.7 299.8,439.7 300.0,441.0 300.3,438.5 300.5,438.4 300.7,440.6 300.9,437.4 301.1,438.7 301.4,436.9 301.6,438.4 301.8,437.5 302.0,437.7 302.3,435.7 302.5,431.7 302.7,435.4 302.9,433.1 303.1,433.5 303.4,432.2 303.6,431.4 303.8,431.6 304.0,432.1 304.2,431.9 304.5,428.4 304.7,429.0 304.9,426.2 305.1,426.1 305.4,428.4 305.6,425.8 305.8,426.1 306.0,425.9 306.2,424.6 306.5,424.6 306.7,419.2 306.9,422.6 307.1,418.7 307.3,417.3 307.6,418.1 307.8,415.5 308.0,416.3 308.2,416.4 308.5,413.6 308.7,413.7 308.9,411.6 309.1,414.2 309.3,410.8 309.6,409.0 309.8,405.3 310.0,407.5 310.2,407.4 310.4,408.5 310.7,406.1 310.9,403.6 311.1,402.8 311.3,400.4 311.5,404.2 311.8,398.2 312.0,401.0 312.2,399.9 312.4,398.9 312.7,396.6 312.9,399.6 313.1,394.1 313.3,391.9 313.5,395.9 313.8,391.8 314.0,389.1 314.2,389.3 314.4,386.3 314.6,391.5 314.9,387.2 315.1,384.1 315.3,384.6 315.5,385.9 315.8,382.7 316.0,383.4 316.2,381.6 316.4,383.6 316.6,379.9 316.9,373.4 317.1,378.2 317.3,382.2 317.5,376.8 317.7,378.3 318.0,379.2 318.2,371.9 318.4,375.0 318.6,370.8 318.9,373.3 319.1,368.7 319.3,377.5 319.5,374.6 319.7,370.3 320.0,375.4 320.2,371.4 320.4,375.0 320.6,365.2 320.8,372.0 321.1,368.0 321.3,372.4 321.5,367.7 321.7,368.2 321.9,371.0 322.2,370.3 322.4,370.6 322.6,365.2 322.8,367.8 323.1,369.2 323.3,368.9 323.5,368.0 323.7,368.9 323.9,371.2 324.2,371.4 324.4,373.0 324.6,370.5 324.8,367.0 325.0,368.5 325.3,370.0 325.5,366.3 325.7,364.6 325.9,368.5 326.2,366.4 326.4,370.8 326.6,371.4 326.8,370.3 327.0,368.4 327.3,367.6 327.5,365.6 327.7,377.8 327.9,368.6 328.1,375.4 328.4,373.5 328.6,376.7 328.8,376.9 329.0,372.3 329.3,374.7 329.5,379.9 329.7,372.5 329.9,376.1 330.1,377.0 330.4,377.6 330.6,376.6 330.8,381.9 331.0,381.4 331.2,384.0 331.5,379.8 331.7,379.4 331.9,389.0 332.1,386.2 332.3,382.8 332.6,390.8 332.8,386.5 333.0,385.8 333.2,383.0 333.5,389.0 333.7,391.4 333.9,391.6 334.1,393.0 334.3,391.0 334.6,392.0 334.8,387.3 335.0,394.3 335.2,396.6 335.4,406.1 335.7,396.5 335.9,391.0 336.1,399.2 336.3,403.4 336.6,399.1 336.8,399.4 337.0,400.6 337.2,407.3 337.4,404.1 337.7,409.7 337.9,402.4 338.1,408.1 338.3,410.8 338.5,411.1 338.8,410.2 339.0,413.6 339.2,411.3 339.4,414.1 339.7,415.6 339.9,418.2 340.1,413.7 340.3,420.6 340.5,417.4 340.8,422.2 341.0,422.7 341.2,423.2 341.4,425.1 341.6,421.2 341.9,423.2 342.1,423.2 342.3,426.6 342.5,426.0 342.7,427.0 343.0,432.0 343.2,428.8 343.4,428.5 343.6,423.7 343.9,437.8 344.1,434.3 344.3,438.3 344.5,435.3 344.7,433.7 345.0,440.2 345.2,433.3 345.4,433.6 345.6,441.0 345.8,435.1 346.1,429.7 346.3,440.7 346.5,442.4 346.7,439.2 347.0,435.7 347.2,440.8 347.4,440.2 347.6,444.0 347.8,434.2 348.1,444.8 348.3,441.6 348.5,436.1 348.7,435.8 348.9,439.6 349.2,444.9 349.4,444.6 349.6,444.0 349.8,450.3 350.1,444.9 350.3,444.7 350.5,444.9 350.7,444.0 350.9,442.4 351.2,446.2 351.4,445.2 351.6,439.4 351.8,431.2 352.0,436.0 352.3,439.1 352.5,437.2 352.7,438.4 352.9,442.4 353.1,436.5 353.4,446.3 353.6,441.3 353.8,443.1 354.0,441.1 354.3,440.0 354.5,438.8 354.7,432.4 354.9,435.8 355.1,440.5 355.4,436.4 355.6,439.2 355.8,438.4 356.0,431.0 356.2,431.9 356.5,432.4 356.7,431.9 356.9,442.2 357.1,442.1 357.4,430.6 357.6,438.2 357.8,438.5 358.0,433.2 358.2,424.8 358.5,427.8 358.7,427.4 358.9,425.6 359.1,415.7 359.3,419.4 359.6,416.9 359.8,414.1 360.0,426.6 360.2,421.3 360.5,419.6 360.7,418.9 360.9,414.8 361.1,415.6 361.3,412.9 361.6,411.6 361.8,412.4 362.0,417.7 362.2,406.2 362.4,410.1 362.7,418.0 362.9,410.4 363.1,414.2 363.3,403.7 363.6,411.2 363.8,403.2 364.0,400.5 364.2,410.1 364.4,401.7 364.7,401.1 364.9,409.8 365.1,396.9 365.3,407.2 365.5,383.0 365.8,400.6 366.0,410.3 366.2,399.2 366.4,391.8 366.6,396.7 366.9,395.0 367.1,391.4 367.3,390.4 367.5,394.6 367.8,389.8 368.0,396.7 368.2,386.0 368.4,377.1 368.6,383.0 368.9,394.6 369.1,377.0 369.3,382.2 369.5,380.8 369.7,386.5 370.0,374.8 370.2,371.5 370.4,383.3 370.6,370.3 370.9,376.1 371.1,367.4 371.3,387.8 371.5,375.8 371.7,357.3 372.0,373.2 372.2,371.9 372.4,374.1 372.6,377.5 372.8,370.7 373.1,388.0 373.3,373.9 373.5,384.4 373.7,378.0 374.0,380.3 374.2,369.1 374.4,364.1 374.6,369.0 374.8,378.6 375.1,371.6 375.3,366.1 375.5,366.1 375.7,373.4 375.9,363.1 376.2,372.2 376.4,379.0 376.6,366.6 376.8,352.8 377.0,363.4 377.3,371.1 377.5,358.1 377.7,358.6 377.9,372.9 378.2,365.8 378.4,365.5 378.6,358.1 378.8,368.4 379.0,379.4 379.3,368.9 379.5,374.6 379.7,371.5 379.9,368.9 380.1,371.6 380.4,374.9 380.6,378.1 380.8,372.2 381.0,355.5 381.3,366.8 381.5,377.0 381.7,372.6 381.9,363.9 382.1,374.3 382.4,378.1 382.6,371.9 382.8,375.2 383.0,371.3 383.2,372.4 383.5,372.6 383.7,374.5 383.9,393.0 384.1,374.7 384.4,383.1 384.6,387.2 384.8,371.9 385.0,385.3 385.2,368.1 385.5,387.9 385.7,393.5 385.9,394.1 386.1,375.0 386.3,389.5 386.6,387.7 386.8,387.6 387.0,398.7 387.2,383.7 387.4,388.8 387.7,389.4 387.9,392.5 388.1,381.9 388.3,391.3 388.6,403.7 388.8,394.0 389.0,396.2 389.2,414.1 389.4,389.9 389.7,400.6 389.9,412.7 390.1,416.1 390.3,406.2 390.5,404.2 390.8,424.6 391.0,421.8 391.2,390.0 391.4,410.2 391.7,394.6 391.9,409.5 392.1,404.8 392.3,405.5 392.5,414.7 392.8,410.8 393.0,430.0 393.2,391.0 393.4,424.6 393.6,418.9 393.9,406.4 394.1,427.4 394.3,421.1 394.5,416.2 394.8,445.7 395.0,416.5 395.2,410.5 395.4,441.2 395.6,415.8 395.9,421.5 396.1,431.5 396.3,431.2 396.5,439.7 396.7,417.5 397.0,430.6 397.2,417.1 397.4,432.8 397.6,425.7 397.8,422.7 398.1,421.5 398.3,429.3 398.5,412.5 398.7,425.6 399.0,417.7 399.2,427.8 399.4,459.2 399.6,429.6 399.8,420.2 400.1,428.7 400.3,459.0 400.5,440.6 400.7,388.8 400.9,445.0 401.2,422.4 401.4,460.6 401.6,447.0 401.8,450.2 402.1,438.8 402.3,443.2 402.5,412.1 402.7,446.0 402.9,451.1 403.2,453.4 403.4,447.7 403.6,438.3 403.8,415.4 404.0,453.5 404.3,436.8 404.5,440.5 404.7,423.1 404.9,452.2 405.2,458.1 405.4,453.2 405.6,440.4 405.8,451.6 406.0,445.0 406.3,441.3 406.5,442.2 406.7,430.3 406.9,439.7 407.1,449.6 407.4,451.9 407.6,441.0 407.8,468.5 408.0,429.9 408.2,422.6 408.5,422.7 408.7,437.4 408.9,441.8 409.1,414.8 409.4,437.5 409.6,421.3 409.8,442.0 410.0,439.2 410.2,448.3 410.5,429.2 410.7,425.0 410.9,436.7 411.1,464.6 411.3,385.1 411.6,392.7 411.8,427.1 412.0,459.3 412.2,427.5 412.5,431.2 412.7,434.7 412.9,416.6 413.1,440.0 413.3,388.6 413.6,423.9 413.8,413.4 414.0,388.6 414.2,398.1 414.4,435.4 414.7,400.7 414.9,430.0 415.1,416.0 415.3,363.8 415.6,399.0 415.8,430.5 416.0,397.7 416.2,430.9 416.4,365.8 416.7,380.9 416.9,396.8 417.1,430.7 417.3,369.6 417.5,363.6 417.8,416.3 418.0,411.9 418.2,349.0 418.4,425.3 418.6,391.9 418.9,448.0 419.1,371.3 419.3,386.7 419.5,399.9 419.8,385.0 420.0,371.3 420.2,402.1 420.4,349.0 420.6,363.0 420.9,398.6 421.1,374.6 421.3,413.0 421.5,375.3 421.7,398.1 422.0,396.0 422.2,401.9 422.4,390.1 422.6,394.0 422.9,366.2 423.1,383.0 423.3,411.2 423.5,372.4 423.7,365.3 424.0,354.6 424.2,377.4 424.4,390.1 424.6,355.2 424.8,398.1 425.1,386.8 425.3,369.1 425.5,378.7 425.7,347.4 426.0,383.6 426.2,371.3 426.4,359.2 426.6,339.3 426.8,344.6 427.1,424.3 427.3,372.6 427.5,380.0 427.7,367.9 427.9,351.0 428.2,367.3 428.4,353.9 428.6,411.2 428.8,358.6 429.0,366.2 429.3,371.3 429.5,381.6 429.7,404.8 429.9,372.9 430.2,364.1 430.4,391.4 430.6,364.6 430.8,360.4 431.0,401.8 431.3,384.7 431.5,385.3 431.7,408.5 431.9,363.7 432.1,387.5 432.4,369.1 432.6,372.6 432.8,380.1 433.0,349.0 433.3,397.8 433.5,344.0 433.7,371.3 433.9,349.0 434.1,378.8 434.4,387.7 434.6,384.4 434.8,420.7 435.0,412.4 435.2,417.0 435.5,388.4 435.7,346.6 435.9,376.9 436.1,354.2 436.4,409.6 436.6,390.5 436.8,367.0 437.0,367.2 437.2,420.0 437.5,400.0 437.7,332.1 437.9,404.8 438.1,393.1 438.3,372.9 438.6,346.2 438.8,369.8 439.0,413.2 439.2,367.0 439.4,404.8 439.7,373.4 439.9,360.8 440.1,376.2 440.3,431.6 440.6,391.9 440.8,391.9 441.0,387.0 441.2,379.5 441.4,413.2 441.7,415.0 441.9,409.1 442.1,400.0 442.3,358.3 442.5,412.4 442.8,428.7 443.0,410.2 443.2,409.1 443.4,379.5 443.7,373.1 443.9,404.8 444.1,451.6 444.3,440.3 444.5,387.2 444.8,421.0 445.0,415.3 445.2,442.6 445.4,387.5 445.6,426.6 445.9,444.2 446.1,452.6 446.3,434.3 446.5,450.4 446.8,408.9 447.0,433.6 447.2,380.9 447.4,411.0 447.6,387.0 447.9,393.6 448.1,446.6 448.3,409.9 448.5,434.3 448.7,448.2 449.0,420.0 449.2,443.4 449.4,451.3 449.6,430.5 449.8,404.8 450.1,390.9 450.3,432.7 450.5,404.8 450.7,433.6 451.0,416.8 451.2,416.8 451.4,374.4 451.6,387.5 451.8,464.6 452.1,482.0 452.3,448.2 452.5,404.8 452.7,443.4 452.9,432.7 453.2,513.9 453.4,484.8 453.6,448.2 453.8,445.2 454.1,438.3 454.3,471.7 454.5,420.0 454.7,390.9 454.9,450.4 455.2,412.1 455.4,441.2 455.6,470.3 455.8,508.4 456.0,430.5 456.3,442.0 456.5,411.5 456.7,441.2 456.9,460.6 457.2,423.4 457.4,460.6 457.6,404.8 457.8,376.9 458.0,389.6 458.3,470.3 458.5,443.4 458.7,386.2 458.9,432.7 459.1,404.8 459.4,460.6 459.6,380.9 459.8,396.8 460.0,434.3 460.2,404.8 460.5,389.6 460.7,469.1 460.9,412.8 461.1,443.4 461.4,428.7 461.6,404.8 461.8,417.7 462.0,466.4 462.2,371.3 462.5,349.0 462.7,432.7 462.9,376.9 463.1,397.5 463.3,363.0 463.6,480.8 463.8,482.9 464.0,443.4 464.2,480.8 464.5,425.7 464.7,395.0 464.9,428.7 465.1,420.0 465.3,438.3 465.6,423.4 465.8,376.9 466.0,438.3 466.2,391.9 466.4,337.9 466.7,438.3 466.9,509.4 467.1,391.9 467.3,505.2 467.6,363.0 467.8,404.8 468.0,366.2 468.2,366.2 468.4,446.6 468.7,428.7 468.9,404.8 469.1,488.5 469.3,428.7 469.5,420.0 469.8,423.4 470.0,328.8 470.2,460.0 470.4,446.6 470.6,404.8 470.9,371.3 471.1,298.3 471.3,460.0 471.5,340.5 471.8,460.0 472.0,389.6 472.2,460.0 472.4,357.0 472.6,380.9 472.9,349.0 473.1,349.0 473.3,380.9 473.5,237.5 473.7,237.5 474.0,371.3 474.2,460.0 474.4,293.3 474.6,274.7 474.9,417.7 475.1,420.0 475.3,349.0 475.5,363.0 475.7,333.1 476.0,404.8 476.2,380.9 476.4,321.8 476.6,298.3 476.8,300.2 477.1,460.0 477.3,333.1 477.5,386.2 477.7,321.1 478.0,274.7 478.2,349.0 478.4,460.0 478.6,349.0 478.8,278.5 479.1,285.3 479.3,304.4 479.5,404.8 479.7,304.4 479.9,371.3 480.2,333.1 480.4,460.0 480.6,371.3 480.8,460.0 481.0,438.3 481.3,438.3 481.5,404.8 481.7,349.0 481.9,404.8 482.2,349.0 482.4,432.7 482.6,423.4 482.8,371.3 483.0,349.0 483.3,460.0 483.5,363.0 483.7,349.0 483.9,349.0 484.1,363.0 484.4,438.3 484.6,321.1 484.8,304.4 485.0,404.8 485.3,460.0 485.5,404.8 485.7,321.1 485.9,321.1 486.1,438.3 486.4,328.1 486.6,308.3 486.8,371.3 487.0,328.0 487.2,496.8 487.5,280.4 487.7,327.2 487.9,404.8 488.1,404.8 488.4,428.7 488.6,304.4 488.8,363.0 489.0,438.3 489.2,404.8 489.5,321.1 489.7,488.5 489.9,404.8 490.1,371.3 490.3,293.3 490.6,572.1 490.8,438.3 491.0,237.5 491.2,237.5 491.4,404.8 491.7,572.1 491.9,460.6 492.1,237.5 492.3,404.8 492.6,303.7 492.8,572.1 493.0,460.6 493.2,428.7 493.4,391.9 493.7,349.0 493.9,572.1 494.1,404.8 494.3,404.8 494.5,332.1 494.8,371.3 495.0,572.1 495.2,304.4 495.4,460.6 495.7,349.0 495.9,572.1 496.1,349.0 496.3,446.6 496.5,371.3 496.8,321.1 497.0,572.1 497.2,404.8 497.4,460.6 497.6,349.0 497.9,237.5 498.1,572.1 498.3,237.5 498.5,237.5 498.8,404.8 499.0,488.5 499.2,572.1 499.4,371.3 499.6,572.1 499.9,404.8 500.1,460.6 500.3,404.8 500.5,404.8 500.7,572.1 501.0,438.3 501.2,304.4 501.4,301.7 501.6,505.2 501.9,572.1 502.1,404.8 502.3,488.5 502.5,237.5 502.7,505.2 503.0,572.1 503.2,488.5 503.4,237.5 503.6,460.6 503.8,488.5 504.1,572.1 504.3,488.5 504.5,460.6 504.7,460.6 504.9,305.2 505.2,572.1 505.4,488.5 505.6,438.3 505.8,337.2 506.1,295.0 506.3,572.1 506.5,572.1 506.7,460.6 506.9,488.5 507.2,404.8 507.4,404.8 507.6,572.1 507.8,404.8 508.0,349.0 508.3,460.6 508.5,460.6 508.7,572.1 508.9,488.5 509.2,237.5 509.4,237.5 509.6,404.8 509.8,572.1 510.0,460.6 510.3,572.1 510.5,572.1 510.7,488.5 510.9,572.1 511.1,572.1 511.4,505.2 511.6,572.1 511.8,404.8 512.0,488.5 512.3,572.1 512.5,276.8 512.7,298.8 512.9,572.1 513.1,371.3 513.4,438.3 513.6,438.3 513.8,572.1 514.0,321.1 514.2,572.1 514.5,488.5 514.7,349.0 514.9,237.5 515.1,460.6 515.3,572.1 515.6,237.5 515.8,404.8 516.0,572.1 516.2,488.5 516.5,438.3 516.7,404.8 516.9,572.1 517.1,404.8 517.3,572.1 517.6,572.1 517.8,404.8 518.0,438.3 518.2,572.1 518.4,237.5 518.7,404.8 518.9,572.1 519.1,572.1 519.3,404.8 519.6,237.5 519.8,237.5 520.0,505.2 520.2,572.1 520.4,237.5 520.7,404.8 520.9,293.3 521.1,572.1 521.3,404.8 521.5,237.5 521.8,572.1 522.0,572.1 522.2,371.3 522.4,460.6 522.7,237.5 522.9,237.5 523.1,572.1 523.3,237.5 523.5,460.6 523.8,304.4 524.0,237.5 524.2,572.1 524.4,404.8 524.6,460.6 524.9,237.5 525.1,460.6 525.3,572.1 525.5,404.8 525.7,237.5 526.0,237.5 526.2,404.8 526.4,572.1 526.6,404.8 526.9,237.5 527.1,237.5 527.3,460.6 527.5,572.1 527.7,237.5 528.0,572.1 528.2,349.0 528.4,237.5 528.6,349.0 528.8,404.8 529.1,572.1 529.3,237.5 529.5,349.0 529.7,404.8 530.0,404.8 530.2,572.1 530.4,237.5 530.6,237.5 530.8,572.1 531.1,349.0 531.3,237.5 531.5,572.1 531.7,321.1 531.9,237.5 532.2,572.1 532.4,349.0 532.6,237.5 532.8,572.1 533.1,349.0 533.3,404.8 533.5,404.8 533.7,237.5 533.9,572.1 534.2,572.1 534.4,237.5 534.6,349.0 534.8,572.1 535.0,572.1 535.3,572.1 535.5,237.5 535.7,237.5 535.9,404.8 536.1,572.1 536.4,460.6 536.6,404.8 536.8,237.5 537.0,404.8 537.3,572.1 537.5,404.8 537.7,488.5 537.9,237.5 538.1,404.8 538.4,572.1 538.6,349.0 538.8,404.8 539.0,237.5 539.2,237.5 539.5,572.1 539.7,237.5 539.9,572.1 540.1,460.6 540.4,572.1 540.6,572.1 540.8,237.5 541.0,237.5 541.2,438.3 541.5,404.8 541.7,572.1 541.9,572.1 542.1,237.5 542.3,460.6 542.6,572.1 542.8,404.8 543.0,237.5 543.2,237.5 543.5,404.8 543.7,572.1 543.9,237.5 544.1,488.5 544.3,404.8 544.6,237.5 544.8,572.1 545.0,237.5 545.2,404.8 545.4,572.1 545.7,404.8 545.9,572.1 546.1,237.5 546.3,237.5 546.5,237.5 546.8,572.1 547.0,237.5 547.2,349.0 547.4,237.5 547.7,404.8 547.9,572.1 548.1,404.8 548.3,404.8 548.5,237.5 548.8,404.8 549.0,572.1 549.2,237.5 549.4,460.6 549.6,572.1 549.9,438.3 550.1,404.8 550.3,237.5 550.5,460.6 550.8,572.1 551.0,404.8 551.2,404.8 551.4,237.5 551.6,404.8 551.9,572.1 552.1,404.8 552.3,404.8 552.5,237.5 552.7,349.0 553.0,572.1 553.2,404.8 553.4,404.8 553.6,237.5 553.9,237.5 554.1,237.5 554.3,404.8 554.5,404.8 554.7,572.1 555.0,460.6 555.2,237.5 555.4,237.5 555.6,404.8 555.8,572.1 556.1,572.1 556.3,237.5 556.5,460.6 556.7,404.8 556.9,460.6 557.2,572.1 557.4,237.5 557.6,404.8 557.8,404.8 558.1,237.5 558.3,572.1 558.5,404.8 558.7,237.5 558.9,488.5 559.2,572.1 559.4,237.5 559.6,237.5 559.8,237.5 560.0,404.8 560.3,572.1 560.5,237.5 560.7,404.8 560.9,237.5 561.2,237.5 561.4,572.1 561.6,572.1 561.8,404.8 562.0,404.8 562.3,237.5 562.5,237.5 562.7,404.8 562.9,237.5 563.1,237.5 563.4,572.1 563.6,404.8 563.8,572.1 564.0,572.1 564.3,404.8 564.5,572.1 564.7,572.1 564.9,572.1 565.1,404.8 565.4,572.1 565.6,404.8 565.8,404.8 566.0,572.1 566.2,404.8 566.5,572.1 566.7,572.1 566.9,404.8 567.1,404.8 567.3,572.1 567.6,404.8 567.8,572.1 568.0,572.1 568.2,572.1 568.5,237.5 568.7,572.1 568.9,237.5 569.1,572.1 569.3,237.5 569.6,572.1 569.8,237.5 570.0,572.1 570.2,237.5 570.4,572.1 570.7,237.5 570.9,572.1 571.1,237.5 571.3,572.1 571.6,237.5 571.8,572.1 572.0,237.5 572.2,572.1 572.4,237.5 572.7,572.1 572.9,237.5 573.1,572.1 573.3,237.5 573.5,572.1 573.8,237.5 574.0,572.1 574.2,237.5 574.4,572.1 574.7,237.5 574.9,572.1 575.1,404.8 575.3,572.1 575.5,404.8 575.8,572.1 576.0,572.1 576.2,572.1 576.4,404.8 576.6,572.1 576.9,404.8 577.1,404.8 577.3,572.1 577.5,404.8 577.7,572.1 578.0,237.5 578.2,404.8 578.4,404.8 578.6,572.1 578.9,572.1 579.1,404.8 579.3,572.1 579.5,404.8 579.7,404.8 580.0,572.1 580.2,404.8 580.4,572.1 580.6,572.1 580.8,404.8 581.1,572.1 581.3,237.5 581.5,572.1 581.7,237.5 582.0,572.1 582.2,572.1 582.4,404.8 582.6,572.1 582.8,404.8 583.1,404.8 583.3,572.1 583.5,404.8 583.7,404.8 583.9,572.1 584.2,572.1 584.4,404.8 584.6,572.1 584.8,404.8 585.1,404.8 585.3,572.1 585.5,572.1 585.7,237.5 585.9,572.1 586.2,237.5 586.4,572.1 586.6,237.5 586.8,572.1 587.0,237.5 587.3,572.1 587.5,237.5 587.7,572.1 587.9,572.1 588.1,404.8 588.4,404.8 588.6,572.1 588.8,572.1 589.0,404.8 589.3,572.1 589.5,572.1 589.7,572.1 589.9,572.1 590.1,404.8 590.4,404.8 590.6,572.1 590.8,404.8 591.0,237.5 591.2,404.8 591.5,237.5 591.7,404.8 591.9,237.5 592.1,404.8 592.4,237.5 592.6,404.8 592.8,237.5 593.0,404.8 593.2,237.5 593.5,404.8 593.7,237.5 593.9,404.8 594.1,237.5 594.3,404.8 594.6,237.5 594.8,404.8 595.0,404.8 595.2,404.8 595.5,404.8 595.7,404.8 595.9,404.8 596.1,404.8 596.3,404.8 596.6,404.8 596.8,404.8 597.0,404.8 597.2,404.8 597.4,404.8 597.7,404.8 597.9,404.8 598.1,460.5 598.3,404.8 598.5,404.8 598.8,404.8 599.0,404.8 599.2,404.8 599.4,404.8 599.7,404.8 599.9,404.8 600.1,404.8 600.3,572.1 600.5,404.8 600.8,572.1 601.0,404.8 601.2,572.1 601.4,404.8 601.6,404.8 601.9,404.8 602.1,404.8 602.3,404.8 602.5,404.8 602.8,404.8 603.0,404.8 603.2,404.8 603.4,404.8 603.6,404.8 603.9,404.8 604.1,404.8 604.3,572.1 604.5,404.8 604.7,572.1 605.0,404.8 605.2,572.1 605.4,404.8 605.6,237.5 605.9,404.8 606.1,237.5 606.3,404.8 606.5,237.5 606.7,404.8 607.0,237.5 607.2,404.8 607.4,237.5 607.6,572.1 607.8,237.5 608.1,572.1 608.3,237.5 608.5,404.8 608.7,572.1 608.9,404.8 609.2,572.1 609.4,404.8 609.6,572.1 609.8,404.8 610.1,572.1 610.3,404.8 610.5,572.1 610.7,404.8 610.9,404.8 611.2,404.8 611.4,404.8 611.6,404.8 611.8,404.8 612.0,404.8 612.3,404.8 612.5,404.8 612.7,404.8 612.9,404.8 613.2,237.5 613.4,404.8 613.6,237.5 613.8,572.1 614.0,237.5 614.3,572.1 614.5,237.5 614.7,404.8 614.9,572.1 615.1,404.8 615.4,572.1 615.6,404.8 615.8,572.1 616.0,404.8 616.3,572.1 616.5,404.8 616.7,572.1 616.9,404.8 617.1,572.1 617.4,404.8 617.6,572.1 617.8,404.8 618.0,572.1 618.2,404.8 618.5,572.1 618.7,572.1 618.9,237.5 619.1,572.1 619.3,237.5 619.6,572.1 619.8,237.5 620.0,404.8 620.2,572.1 620.5,404.8 620.7,572.1 620.9,404.8 621.1,572.1 621.3,404.8 621.6,572.1 621.8,404.8 622.0,572.1 622.2,404.8 622.4,572.1 622.7,404.8 622.9,237.5 623.1,404.8 623.3,572.1 623.6,404.8 623.8,572.1 624.0,404.8 624.2,572.1 624.4,404.8 624.7,572.1 624.9,404.8 625.1,404.8 625.3,404.8 625.5,237.5 625.8,404.8 626.0,404.8 626.2,404.8 626.4,404.8 626.7,404.8 626.9,404.8 627.1,404.8 627.3,404.8 627.5,404.8 627.8,404.8 628.0,404.8 628.2,404.8 628.4,404.8 628.6,237.5 628.9,404.8 629.1,237.5 629.3,404.8 629.5,237.5 629.7,404.8 630.0,237.5 630.2,404.8 630.4,237.5 630.6,404.8 630.9,237.5 631.1,404.8 631.3,404.8 631.5,404.8 631.7,572.1 632.0,404.8 632.2,404.8 632.4,404.8 632.6,404.8 632.8,404.8 633.1,404.8 633.3,404.8 633.5,404.8 633.7,404.8 634.0,404.8 634.2,404.8 634.4,404.8 634.6,404.8 634.8,404.8 635.1,404.8 635.3,404.8 635.5,572.1 635.7,404.8 635.9,404.8 636.2,404.8 636.4,404.8 636.6,404.8 636.8,404.8 637.1,404.8 637.3,404.8 637.5,404.8 637.7,404.8 637.9,404.8 638.2,404.8 638.4,404.8 638.6,404.8 638.8,237.5 639.0,404.8 639.3,237.5 639.5,404.8 639.7,237.5 639.9,404.8 640.2,237.5 640.4,404.8 640.6,237.5 640.8,404.8 641.0,237.5 641.3,404.8 641.5,237.5 641.7,404.8 641.9,237.5 642.1,404.8 642.4,237.5 642.6,404.8 642.8,237.5 643.0,404.8 643.2,237.5 643.5,404.8 643.7,237.5 643.9,404.8 644.1,237.5 644.4,404.8 644.6,237.5 644.8,404.8 645.0,404.8 645.2,404.8 645.5,404.8 645.7,404.8 645.9,572.1 646.1,404.8 646.3,404.8 646.6,404.8 646.8,404.8 647.0,404.8 647.2,404.8 647.5,404.8 647.7,404.8 647.9,404.8 648.1,404.8 648.3,404.8 648.6,404.8 648.8,404.8 649.0,404.8 649.2,404.8 649.4,404.8 649.7,404.8 649.9,404.8 650.1,404.8 650.3,404.8 650.6,404.8 650.8,404.8 651.0,404.8 651.2,404.8 651.4,404.8 651.7,404.8 651.9,404.8 652.1,404.8 652.3,404.8 652.5,404.8 652.8,404.8 653.0,404.8 653.2,404.8 653.4,404.8 653.6,404.8 653.9,237.5 654.1,404.8 654.3,404.8 654.5,404.8 654.8,404.8 655.0,404.8 655.2,404.8 655.4,404.8 655.6,404.8 655.9,404.8 656.1,572.1 656.3,404.8 656.5,404.8 656.7,404.8 657.0,404.8 657.2,404.8 657.4,404.8 657.6,404.8 657.9,404.8 658.1,404.8 658.3,404.8 658.5,404.8 658.7,404.8 659.0,404.8 659.2,404.8 659.4,404.8 659.6,404.8 659.8,404.8 660.1,404.8 660.3,572.1 660.5,404.8 660.7,404.8 661.0,404.8 661.2,404.8 661.4,404.8 661.6,404.8 661.8,404.8 662.1,404.8 662.3,404.8 662.5,404.8 662.7,404.8 662.9,404.8 663.2,404.8 663.4,404.8 663.6,404.8 663.8,404.8 664.0,404.8 664.3,404.8 664.5,404.8 664.7,404.8 664.9,237.5 665.2,404.8 665.4,237.5 665.6,404.8 665.8,237.5 666.0,404.8 666.3,237.5 666.5,404.8 666.7,404.8 666.9,404.8 667.1,404.8 667.4,404.8 667.6,404.8 667.8,404.8 668.0,404.8 668.3,404.8 668.5,572.1 668.7,404.8 668.9,404.8" fill="none" stroke="#1f77b4" stroke-width="2.35" stroke-linejoin="round" stroke-linecap="square"/>
<rect x="196.5" y="220.5" width="496" height="368" fill="none" stroke="#000" stroke-width="1.1"/>
<line x1="217.5" y1="589" x2="217.5" y2="593.9" stroke="#000" stroke-width="1.1"/><text x="217.5" y="609.3" font-size="13.89" text-anchor="middle">0</text>
<line x1="286.5" y1="589" x2="286.5" y2="593.9" stroke="#000" stroke-width="1.1"/><text x="286.5" y="609.3" font-size="13.89" text-anchor="middle">5</text>
<line x1="355.5" y1="589" x2="355.5" y2="593.9" stroke="#000" stroke-width="1.1"/><text x="355.5" y="609.3" font-size="13.89" text-anchor="middle">10</text>
<line x1="424.5" y1="589" x2="424.5" y2="593.9" stroke="#000" stroke-width="1.1"/><text x="424.5" y="609.3" font-size="13.89" text-anchor="middle">15</text>
<line x1="494.5" y1="589" x2="494.5" y2="593.9" stroke="#000" stroke-width="1.1"/><text x="494.5" y="609.3" font-size="13.89" text-anchor="middle">20</text>
<line x1="563.5" y1="589" x2="563.5" y2="593.9" stroke="#000" stroke-width="1.1"/><text x="563.5" y="609.3" font-size="13.89" text-anchor="middle">25</text>
<line x1="632.5" y1="589" x2="632.5" y2="593.9" stroke="#000" stroke-width="1.1"/><text x="632.5" y="609.3" font-size="13.89" text-anchor="middle">30</text>
<line x1="191.1" y1="237.5" x2="196" y2="237.5" stroke="#000" stroke-width="1.1"/><text x="186.6" y="242.7" font-size="13.89" text-anchor="end">1.00</text>
<line x1="191.1" y1="279.5" x2="196" y2="279.5" stroke="#000" stroke-width="1.1"/><text x="186.6" y="284.7" font-size="13.89" text-anchor="end">0.75</text>
<line x1="191.1" y1="321.5" x2="196" y2="321.5" stroke="#000" stroke-width="1.1"/><text x="186.6" y="326.7" font-size="13.89" text-anchor="end">0.50</text>
<line x1="191.1" y1="363.5" x2="196" y2="363.5" stroke="#000" stroke-width="1.1"/><text x="186.6" y="368.7" font-size="13.89" text-anchor="end">0.25</text>
<line x1="191.1" y1="404.5" x2="196" y2="404.5" stroke="#000" stroke-width="1.1"/><text x="186.6" y="409.7" font-size="13.89" text-anchor="end">0.00</text>
<line x1="191.1" y1="446.5" x2="196" y2="446.5" stroke="#000" stroke-width="1.1"/><text x="186.6" y="451.7" font-size="13.89" text-anchor="end">−0.25</text>
<line x1="191.1" y1="488.5" x2="196" y2="488.5" stroke="#000" stroke-width="1.1"/><text x="186.6" y="493.7" font-size="13.89" text-anchor="end">−0.50</text>
<line x1="191.1" y1="530.5" x2="196" y2="530.5" stroke="#000" stroke-width="1.1"/><text x="186.6" y="535.7" font-size="13.89" text-anchor="end">−0.75</text>
<line x1="191.1" y1="572.5" x2="196" y2="572.5" stroke="#000" stroke-width="1.1"/><text x="186.6" y="577.7" font-size="13.89" text-anchor="end">−1.00</text>
<text x="443.5" y="212.3" font-size="16.67" text-anchor="middle">HIFI62798; Pair Asym; long; #1</text>
<text x="444.8" y="631" font-size="13.89" text-anchor="middle">Time (<tspan font-style="italic">µs</tspan>)</text>
<text transform="translate(130.2,405) rotate(-90)" font-size="13.89" text-anchor="middle">Asymmetry (<tspan font-style="italic">µs</tspan>)<tspan dy="-5" font-size="9.7">−1</tspan></text>
<rect x="203.5" y="227.5" width="321.5" height="25" rx="2.8" fill="#fff" fill-opacity="0.8" stroke="#ccc" stroke-width="1.1"/>
<line x1="208" y1="239" x2="237" y2="239" stroke="#1f77b4" stroke-width="2.08"/>
<text x="246.8" y="243.7" font-size="13.89">HIFI62798; Pair Asym; long; #1: spec 1</text>
</svg>
<div style="left:0;top:0;width:1461px;height:1px;background:#1b2b3c"></div>
<div style="left:0;top:0;width:1px;height:911px;background:#1b2b3c"></div>
<div style="left:1459px;top:0;width:2px;height:911px;background:#1b2b3c"></div>
<div style="left:0;top:910px;width:760px;height:1px;background:#6b7480"></div>
</div></body></html>
